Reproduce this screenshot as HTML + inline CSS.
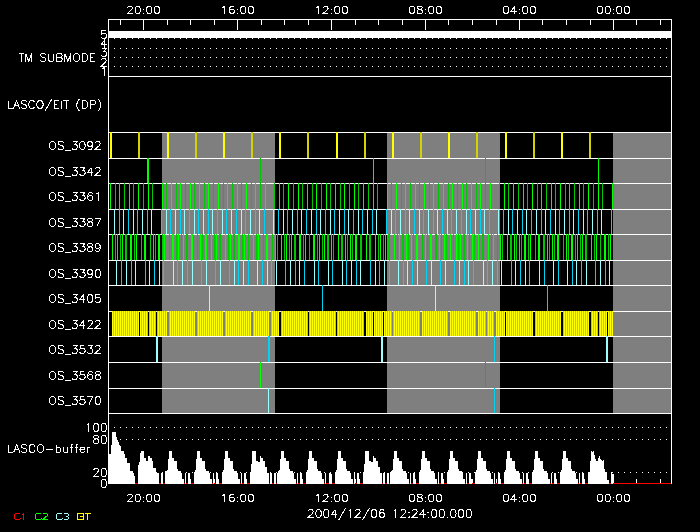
<!DOCTYPE html><html><head><meta charset="utf-8"><title>LASCO schedule</title><style>html,body{margin:0;padding:0;background:#000;width:700px;height:532px;overflow:hidden;font-family:"Liberation Sans",sans-serif}</style></head><body><svg width="700" height="532" viewBox="0 0 700 532" shape-rendering="crispEdges" style="display:block"><rect x="162" y="133" width="113" height="280" fill="#7f7f7f"/><rect x="387" y="133" width="113" height="280" fill="#7f7f7f"/><rect x="613" y="133" width="58" height="280" fill="#7f7f7f"/><rect x="108" y="19" width="564" height="1" fill="#ffffff"/><rect x="108" y="19" width="1" height="465" fill="#ffffff"/><rect x="671" y="19" width="1" height="465" fill="#ffffff"/><rect x="143" y="20" width="1" height="10" fill="#ffffff"/><rect x="237" y="20" width="1" height="10" fill="#ffffff"/><rect x="331" y="20" width="1" height="10" fill="#ffffff"/><rect x="425" y="20" width="1" height="10" fill="#ffffff"/><rect x="519" y="20" width="1" height="10" fill="#ffffff"/><rect x="613" y="20" width="1" height="10" fill="#ffffff"/><rect x="120" y="20" width="1" height="5" fill="#ffffff"/><rect x="167" y="20" width="1" height="5" fill="#ffffff"/><rect x="190" y="20" width="1" height="5" fill="#ffffff"/><rect x="214" y="20" width="1" height="5" fill="#ffffff"/><rect x="261" y="20" width="1" height="5" fill="#ffffff"/><rect x="284" y="20" width="1" height="5" fill="#ffffff"/><rect x="308" y="20" width="1" height="5" fill="#ffffff"/><rect x="355" y="20" width="1" height="5" fill="#ffffff"/><rect x="378" y="20" width="1" height="5" fill="#ffffff"/><rect x="402" y="20" width="1" height="5" fill="#ffffff"/><rect x="448" y="20" width="1" height="5" fill="#ffffff"/><rect x="472" y="20" width="1" height="5" fill="#ffffff"/><rect x="496" y="20" width="1" height="5" fill="#ffffff"/><rect x="542" y="20" width="1" height="5" fill="#ffffff"/><rect x="566" y="20" width="1" height="5" fill="#ffffff"/><rect x="590" y="20" width="1" height="5" fill="#ffffff"/><rect x="636" y="20" width="1" height="5" fill="#ffffff"/><rect x="660" y="20" width="1" height="5" fill="#ffffff"/><rect x="108" y="31" width="563" height="7" fill="#ffffff"/><rect x="114" y="38" width="1" height="1" fill="#ffffff"/><rect x="120" y="38" width="1" height="1" fill="#ffffff"/><rect x="126" y="38" width="1" height="1" fill="#ffffff"/><rect x="132" y="38" width="1" height="1" fill="#ffffff"/><rect x="138" y="38" width="1" height="1" fill="#ffffff"/><rect x="144" y="38" width="1" height="1" fill="#ffffff"/><rect x="150" y="38" width="1" height="1" fill="#ffffff"/><rect x="156" y="38" width="1" height="1" fill="#ffffff"/><rect x="162" y="38" width="1" height="1" fill="#ffffff"/><rect x="168" y="38" width="1" height="1" fill="#ffffff"/><rect x="174" y="38" width="1" height="1" fill="#ffffff"/><rect x="180" y="38" width="1" height="1" fill="#ffffff"/><rect x="186" y="38" width="1" height="1" fill="#ffffff"/><rect x="192" y="38" width="1" height="1" fill="#ffffff"/><rect x="198" y="38" width="1" height="1" fill="#ffffff"/><rect x="204" y="38" width="1" height="1" fill="#ffffff"/><rect x="210" y="38" width="1" height="1" fill="#ffffff"/><rect x="216" y="38" width="1" height="1" fill="#ffffff"/><rect x="222" y="38" width="1" height="1" fill="#ffffff"/><rect x="228" y="38" width="1" height="1" fill="#ffffff"/><rect x="234" y="38" width="1" height="1" fill="#ffffff"/><rect x="240" y="38" width="1" height="1" fill="#ffffff"/><rect x="246" y="38" width="1" height="1" fill="#ffffff"/><rect x="252" y="38" width="1" height="1" fill="#ffffff"/><rect x="258" y="38" width="1" height="1" fill="#ffffff"/><rect x="264" y="38" width="1" height="1" fill="#ffffff"/><rect x="270" y="38" width="1" height="1" fill="#ffffff"/><rect x="276" y="38" width="1" height="1" fill="#ffffff"/><rect x="282" y="38" width="1" height="1" fill="#ffffff"/><rect x="288" y="38" width="1" height="1" fill="#ffffff"/><rect x="294" y="38" width="1" height="1" fill="#ffffff"/><rect x="300" y="38" width="1" height="1" fill="#ffffff"/><rect x="306" y="38" width="1" height="1" fill="#ffffff"/><rect x="312" y="38" width="1" height="1" fill="#ffffff"/><rect x="318" y="38" width="1" height="1" fill="#ffffff"/><rect x="324" y="38" width="1" height="1" fill="#ffffff"/><rect x="330" y="38" width="1" height="1" fill="#ffffff"/><rect x="336" y="38" width="1" height="1" fill="#ffffff"/><rect x="342" y="38" width="1" height="1" fill="#ffffff"/><rect x="348" y="38" width="1" height="1" fill="#ffffff"/><rect x="354" y="38" width="1" height="1" fill="#ffffff"/><rect x="360" y="38" width="1" height="1" fill="#ffffff"/><rect x="366" y="38" width="1" height="1" fill="#ffffff"/><rect x="372" y="38" width="1" height="1" fill="#ffffff"/><rect x="378" y="38" width="1" height="1" fill="#ffffff"/><rect x="384" y="38" width="1" height="1" fill="#ffffff"/><rect x="390" y="38" width="1" height="1" fill="#ffffff"/><rect x="396" y="38" width="1" height="1" fill="#ffffff"/><rect x="402" y="38" width="1" height="1" fill="#ffffff"/><rect x="408" y="38" width="1" height="1" fill="#ffffff"/><rect x="414" y="38" width="1" height="1" fill="#ffffff"/><rect x="420" y="38" width="1" height="1" fill="#ffffff"/><rect x="426" y="38" width="1" height="1" fill="#ffffff"/><rect x="432" y="38" width="1" height="1" fill="#ffffff"/><rect x="438" y="38" width="1" height="1" fill="#ffffff"/><rect x="444" y="38" width="1" height="1" fill="#ffffff"/><rect x="450" y="38" width="1" height="1" fill="#ffffff"/><rect x="456" y="38" width="1" height="1" fill="#ffffff"/><rect x="462" y="38" width="1" height="1" fill="#ffffff"/><rect x="468" y="38" width="1" height="1" fill="#ffffff"/><rect x="474" y="38" width="1" height="1" fill="#ffffff"/><rect x="480" y="38" width="1" height="1" fill="#ffffff"/><rect x="486" y="38" width="1" height="1" fill="#ffffff"/><rect x="492" y="38" width="1" height="1" fill="#ffffff"/><rect x="498" y="38" width="1" height="1" fill="#ffffff"/><rect x="504" y="38" width="1" height="1" fill="#ffffff"/><rect x="510" y="38" width="1" height="1" fill="#ffffff"/><rect x="516" y="38" width="1" height="1" fill="#ffffff"/><rect x="522" y="38" width="1" height="1" fill="#ffffff"/><rect x="528" y="38" width="1" height="1" fill="#ffffff"/><rect x="534" y="38" width="1" height="1" fill="#ffffff"/><rect x="540" y="38" width="1" height="1" fill="#ffffff"/><rect x="546" y="38" width="1" height="1" fill="#ffffff"/><rect x="552" y="38" width="1" height="1" fill="#ffffff"/><rect x="558" y="38" width="1" height="1" fill="#ffffff"/><rect x="564" y="38" width="1" height="1" fill="#ffffff"/><rect x="570" y="38" width="1" height="1" fill="#ffffff"/><rect x="576" y="38" width="1" height="1" fill="#ffffff"/><rect x="582" y="38" width="1" height="1" fill="#ffffff"/><rect x="588" y="38" width="1" height="1" fill="#ffffff"/><rect x="594" y="38" width="1" height="1" fill="#ffffff"/><rect x="600" y="38" width="1" height="1" fill="#ffffff"/><rect x="606" y="38" width="1" height="1" fill="#ffffff"/><rect x="612" y="38" width="1" height="1" fill="#ffffff"/><rect x="618" y="38" width="1" height="1" fill="#ffffff"/><rect x="624" y="38" width="1" height="1" fill="#ffffff"/><rect x="630" y="38" width="1" height="1" fill="#ffffff"/><rect x="636" y="38" width="1" height="1" fill="#ffffff"/><rect x="642" y="38" width="1" height="1" fill="#ffffff"/><rect x="648" y="38" width="1" height="1" fill="#ffffff"/><rect x="654" y="38" width="1" height="1" fill="#ffffff"/><rect x="660" y="38" width="1" height="1" fill="#ffffff"/><rect x="666" y="38" width="1" height="1" fill="#ffffff"/><rect x="114" y="48" width="1" height="1" fill="#ffffff"/><rect x="120" y="48" width="1" height="1" fill="#ffffff"/><rect x="126" y="48" width="1" height="1" fill="#ffffff"/><rect x="132" y="48" width="1" height="1" fill="#ffffff"/><rect x="138" y="48" width="1" height="1" fill="#ffffff"/><rect x="144" y="48" width="1" height="1" fill="#ffffff"/><rect x="150" y="48" width="1" height="1" fill="#ffffff"/><rect x="156" y="48" width="1" height="1" fill="#ffffff"/><rect x="162" y="48" width="1" height="1" fill="#ffffff"/><rect x="168" y="48" width="1" height="1" fill="#ffffff"/><rect x="174" y="48" width="1" height="1" fill="#ffffff"/><rect x="180" y="48" width="1" height="1" fill="#ffffff"/><rect x="186" y="48" width="1" height="1" fill="#ffffff"/><rect x="192" y="48" width="1" height="1" fill="#ffffff"/><rect x="198" y="48" width="1" height="1" fill="#ffffff"/><rect x="204" y="48" width="1" height="1" fill="#ffffff"/><rect x="210" y="48" width="1" height="1" fill="#ffffff"/><rect x="216" y="48" width="1" height="1" fill="#ffffff"/><rect x="222" y="48" width="1" height="1" fill="#ffffff"/><rect x="228" y="48" width="1" height="1" fill="#ffffff"/><rect x="234" y="48" width="1" height="1" fill="#ffffff"/><rect x="240" y="48" width="1" height="1" fill="#ffffff"/><rect x="246" y="48" width="1" height="1" fill="#ffffff"/><rect x="252" y="48" width="1" height="1" fill="#ffffff"/><rect x="258" y="48" width="1" height="1" fill="#ffffff"/><rect x="264" y="48" width="1" height="1" fill="#ffffff"/><rect x="270" y="48" width="1" height="1" fill="#ffffff"/><rect x="276" y="48" width="1" height="1" fill="#ffffff"/><rect x="282" y="48" width="1" height="1" fill="#ffffff"/><rect x="288" y="48" width="1" height="1" fill="#ffffff"/><rect x="294" y="48" width="1" height="1" fill="#ffffff"/><rect x="300" y="48" width="1" height="1" fill="#ffffff"/><rect x="306" y="48" width="1" height="1" fill="#ffffff"/><rect x="312" y="48" width="1" height="1" fill="#ffffff"/><rect x="318" y="48" width="1" height="1" fill="#ffffff"/><rect x="324" y="48" width="1" height="1" fill="#ffffff"/><rect x="330" y="48" width="1" height="1" fill="#ffffff"/><rect x="336" y="48" width="1" height="1" fill="#ffffff"/><rect x="342" y="48" width="1" height="1" fill="#ffffff"/><rect x="348" y="48" width="1" height="1" fill="#ffffff"/><rect x="354" y="48" width="1" height="1" fill="#ffffff"/><rect x="360" y="48" width="1" height="1" fill="#ffffff"/><rect x="366" y="48" width="1" height="1" fill="#ffffff"/><rect x="372" y="48" width="1" height="1" fill="#ffffff"/><rect x="378" y="48" width="1" height="1" fill="#ffffff"/><rect x="384" y="48" width="1" height="1" fill="#ffffff"/><rect x="390" y="48" width="1" height="1" fill="#ffffff"/><rect x="396" y="48" width="1" height="1" fill="#ffffff"/><rect x="402" y="48" width="1" height="1" fill="#ffffff"/><rect x="408" y="48" width="1" height="1" fill="#ffffff"/><rect x="414" y="48" width="1" height="1" fill="#ffffff"/><rect x="420" y="48" width="1" height="1" fill="#ffffff"/><rect x="426" y="48" width="1" height="1" fill="#ffffff"/><rect x="432" y="48" width="1" height="1" fill="#ffffff"/><rect x="438" y="48" width="1" height="1" fill="#ffffff"/><rect x="444" y="48" width="1" height="1" fill="#ffffff"/><rect x="450" y="48" width="1" height="1" fill="#ffffff"/><rect x="456" y="48" width="1" height="1" fill="#ffffff"/><rect x="462" y="48" width="1" height="1" fill="#ffffff"/><rect x="468" y="48" width="1" height="1" fill="#ffffff"/><rect x="474" y="48" width="1" height="1" fill="#ffffff"/><rect x="480" y="48" width="1" height="1" fill="#ffffff"/><rect x="486" y="48" width="1" height="1" fill="#ffffff"/><rect x="492" y="48" width="1" height="1" fill="#ffffff"/><rect x="498" y="48" width="1" height="1" fill="#ffffff"/><rect x="504" y="48" width="1" height="1" fill="#ffffff"/><rect x="510" y="48" width="1" height="1" fill="#ffffff"/><rect x="516" y="48" width="1" height="1" fill="#ffffff"/><rect x="522" y="48" width="1" height="1" fill="#ffffff"/><rect x="528" y="48" width="1" height="1" fill="#ffffff"/><rect x="534" y="48" width="1" height="1" fill="#ffffff"/><rect x="540" y="48" width="1" height="1" fill="#ffffff"/><rect x="546" y="48" width="1" height="1" fill="#ffffff"/><rect x="552" y="48" width="1" height="1" fill="#ffffff"/><rect x="558" y="48" width="1" height="1" fill="#ffffff"/><rect x="564" y="48" width="1" height="1" fill="#ffffff"/><rect x="570" y="48" width="1" height="1" fill="#ffffff"/><rect x="576" y="48" width="1" height="1" fill="#ffffff"/><rect x="582" y="48" width="1" height="1" fill="#ffffff"/><rect x="588" y="48" width="1" height="1" fill="#ffffff"/><rect x="594" y="48" width="1" height="1" fill="#ffffff"/><rect x="600" y="48" width="1" height="1" fill="#ffffff"/><rect x="606" y="48" width="1" height="1" fill="#ffffff"/><rect x="612" y="48" width="1" height="1" fill="#ffffff"/><rect x="618" y="48" width="1" height="1" fill="#ffffff"/><rect x="624" y="48" width="1" height="1" fill="#ffffff"/><rect x="630" y="48" width="1" height="1" fill="#ffffff"/><rect x="636" y="48" width="1" height="1" fill="#ffffff"/><rect x="642" y="48" width="1" height="1" fill="#ffffff"/><rect x="648" y="48" width="1" height="1" fill="#ffffff"/><rect x="654" y="48" width="1" height="1" fill="#ffffff"/><rect x="660" y="48" width="1" height="1" fill="#ffffff"/><rect x="666" y="48" width="1" height="1" fill="#ffffff"/><rect x="114" y="57" width="1" height="1" fill="#ffffff"/><rect x="120" y="57" width="1" height="1" fill="#ffffff"/><rect x="126" y="57" width="1" height="1" fill="#ffffff"/><rect x="132" y="57" width="1" height="1" fill="#ffffff"/><rect x="138" y="57" width="1" height="1" fill="#ffffff"/><rect x="144" y="57" width="1" height="1" fill="#ffffff"/><rect x="150" y="57" width="1" height="1" fill="#ffffff"/><rect x="156" y="57" width="1" height="1" fill="#ffffff"/><rect x="162" y="57" width="1" height="1" fill="#ffffff"/><rect x="168" y="57" width="1" height="1" fill="#ffffff"/><rect x="174" y="57" width="1" height="1" fill="#ffffff"/><rect x="180" y="57" width="1" height="1" fill="#ffffff"/><rect x="186" y="57" width="1" height="1" fill="#ffffff"/><rect x="192" y="57" width="1" height="1" fill="#ffffff"/><rect x="198" y="57" width="1" height="1" fill="#ffffff"/><rect x="204" y="57" width="1" height="1" fill="#ffffff"/><rect x="210" y="57" width="1" height="1" fill="#ffffff"/><rect x="216" y="57" width="1" height="1" fill="#ffffff"/><rect x="222" y="57" width="1" height="1" fill="#ffffff"/><rect x="228" y="57" width="1" height="1" fill="#ffffff"/><rect x="234" y="57" width="1" height="1" fill="#ffffff"/><rect x="240" y="57" width="1" height="1" fill="#ffffff"/><rect x="246" y="57" width="1" height="1" fill="#ffffff"/><rect x="252" y="57" width="1" height="1" fill="#ffffff"/><rect x="258" y="57" width="1" height="1" fill="#ffffff"/><rect x="264" y="57" width="1" height="1" fill="#ffffff"/><rect x="270" y="57" width="1" height="1" fill="#ffffff"/><rect x="276" y="57" width="1" height="1" fill="#ffffff"/><rect x="282" y="57" width="1" height="1" fill="#ffffff"/><rect x="288" y="57" width="1" height="1" fill="#ffffff"/><rect x="294" y="57" width="1" height="1" fill="#ffffff"/><rect x="300" y="57" width="1" height="1" fill="#ffffff"/><rect x="306" y="57" width="1" height="1" fill="#ffffff"/><rect x="312" y="57" width="1" height="1" fill="#ffffff"/><rect x="318" y="57" width="1" height="1" fill="#ffffff"/><rect x="324" y="57" width="1" height="1" fill="#ffffff"/><rect x="330" y="57" width="1" height="1" fill="#ffffff"/><rect x="336" y="57" width="1" height="1" fill="#ffffff"/><rect x="342" y="57" width="1" height="1" fill="#ffffff"/><rect x="348" y="57" width="1" height="1" fill="#ffffff"/><rect x="354" y="57" width="1" height="1" fill="#ffffff"/><rect x="360" y="57" width="1" height="1" fill="#ffffff"/><rect x="366" y="57" width="1" height="1" fill="#ffffff"/><rect x="372" y="57" width="1" height="1" fill="#ffffff"/><rect x="378" y="57" width="1" height="1" fill="#ffffff"/><rect x="384" y="57" width="1" height="1" fill="#ffffff"/><rect x="390" y="57" width="1" height="1" fill="#ffffff"/><rect x="396" y="57" width="1" height="1" fill="#ffffff"/><rect x="402" y="57" width="1" height="1" fill="#ffffff"/><rect x="408" y="57" width="1" height="1" fill="#ffffff"/><rect x="414" y="57" width="1" height="1" fill="#ffffff"/><rect x="420" y="57" width="1" height="1" fill="#ffffff"/><rect x="426" y="57" width="1" height="1" fill="#ffffff"/><rect x="432" y="57" width="1" height="1" fill="#ffffff"/><rect x="438" y="57" width="1" height="1" fill="#ffffff"/><rect x="444" y="57" width="1" height="1" fill="#ffffff"/><rect x="450" y="57" width="1" height="1" fill="#ffffff"/><rect x="456" y="57" width="1" height="1" fill="#ffffff"/><rect x="462" y="57" width="1" height="1" fill="#ffffff"/><rect x="468" y="57" width="1" height="1" fill="#ffffff"/><rect x="474" y="57" width="1" height="1" fill="#ffffff"/><rect x="480" y="57" width="1" height="1" fill="#ffffff"/><rect x="486" y="57" width="1" height="1" fill="#ffffff"/><rect x="492" y="57" width="1" height="1" fill="#ffffff"/><rect x="498" y="57" width="1" height="1" fill="#ffffff"/><rect x="504" y="57" width="1" height="1" fill="#ffffff"/><rect x="510" y="57" width="1" height="1" fill="#ffffff"/><rect x="516" y="57" width="1" height="1" fill="#ffffff"/><rect x="522" y="57" width="1" height="1" fill="#ffffff"/><rect x="528" y="57" width="1" height="1" fill="#ffffff"/><rect x="534" y="57" width="1" height="1" fill="#ffffff"/><rect x="540" y="57" width="1" height="1" fill="#ffffff"/><rect x="546" y="57" width="1" height="1" fill="#ffffff"/><rect x="552" y="57" width="1" height="1" fill="#ffffff"/><rect x="558" y="57" width="1" height="1" fill="#ffffff"/><rect x="564" y="57" width="1" height="1" fill="#ffffff"/><rect x="570" y="57" width="1" height="1" fill="#ffffff"/><rect x="576" y="57" width="1" height="1" fill="#ffffff"/><rect x="582" y="57" width="1" height="1" fill="#ffffff"/><rect x="588" y="57" width="1" height="1" fill="#ffffff"/><rect x="594" y="57" width="1" height="1" fill="#ffffff"/><rect x="600" y="57" width="1" height="1" fill="#ffffff"/><rect x="606" y="57" width="1" height="1" fill="#ffffff"/><rect x="612" y="57" width="1" height="1" fill="#ffffff"/><rect x="618" y="57" width="1" height="1" fill="#ffffff"/><rect x="624" y="57" width="1" height="1" fill="#ffffff"/><rect x="630" y="57" width="1" height="1" fill="#ffffff"/><rect x="636" y="57" width="1" height="1" fill="#ffffff"/><rect x="642" y="57" width="1" height="1" fill="#ffffff"/><rect x="648" y="57" width="1" height="1" fill="#ffffff"/><rect x="654" y="57" width="1" height="1" fill="#ffffff"/><rect x="660" y="57" width="1" height="1" fill="#ffffff"/><rect x="666" y="57" width="1" height="1" fill="#ffffff"/><rect x="114" y="66" width="1" height="1" fill="#ffffff"/><rect x="120" y="66" width="1" height="1" fill="#ffffff"/><rect x="126" y="66" width="1" height="1" fill="#ffffff"/><rect x="132" y="66" width="1" height="1" fill="#ffffff"/><rect x="138" y="66" width="1" height="1" fill="#ffffff"/><rect x="144" y="66" width="1" height="1" fill="#ffffff"/><rect x="150" y="66" width="1" height="1" fill="#ffffff"/><rect x="156" y="66" width="1" height="1" fill="#ffffff"/><rect x="162" y="66" width="1" height="1" fill="#ffffff"/><rect x="168" y="66" width="1" height="1" fill="#ffffff"/><rect x="174" y="66" width="1" height="1" fill="#ffffff"/><rect x="180" y="66" width="1" height="1" fill="#ffffff"/><rect x="186" y="66" width="1" height="1" fill="#ffffff"/><rect x="192" y="66" width="1" height="1" fill="#ffffff"/><rect x="198" y="66" width="1" height="1" fill="#ffffff"/><rect x="204" y="66" width="1" height="1" fill="#ffffff"/><rect x="210" y="66" width="1" height="1" fill="#ffffff"/><rect x="216" y="66" width="1" height="1" fill="#ffffff"/><rect x="222" y="66" width="1" height="1" fill="#ffffff"/><rect x="228" y="66" width="1" height="1" fill="#ffffff"/><rect x="234" y="66" width="1" height="1" fill="#ffffff"/><rect x="240" y="66" width="1" height="1" fill="#ffffff"/><rect x="246" y="66" width="1" height="1" fill="#ffffff"/><rect x="252" y="66" width="1" height="1" fill="#ffffff"/><rect x="258" y="66" width="1" height="1" fill="#ffffff"/><rect x="264" y="66" width="1" height="1" fill="#ffffff"/><rect x="270" y="66" width="1" height="1" fill="#ffffff"/><rect x="276" y="66" width="1" height="1" fill="#ffffff"/><rect x="282" y="66" width="1" height="1" fill="#ffffff"/><rect x="288" y="66" width="1" height="1" fill="#ffffff"/><rect x="294" y="66" width="1" height="1" fill="#ffffff"/><rect x="300" y="66" width="1" height="1" fill="#ffffff"/><rect x="306" y="66" width="1" height="1" fill="#ffffff"/><rect x="312" y="66" width="1" height="1" fill="#ffffff"/><rect x="318" y="66" width="1" height="1" fill="#ffffff"/><rect x="324" y="66" width="1" height="1" fill="#ffffff"/><rect x="330" y="66" width="1" height="1" fill="#ffffff"/><rect x="336" y="66" width="1" height="1" fill="#ffffff"/><rect x="342" y="66" width="1" height="1" fill="#ffffff"/><rect x="348" y="66" width="1" height="1" fill="#ffffff"/><rect x="354" y="66" width="1" height="1" fill="#ffffff"/><rect x="360" y="66" width="1" height="1" fill="#ffffff"/><rect x="366" y="66" width="1" height="1" fill="#ffffff"/><rect x="372" y="66" width="1" height="1" fill="#ffffff"/><rect x="378" y="66" width="1" height="1" fill="#ffffff"/><rect x="384" y="66" width="1" height="1" fill="#ffffff"/><rect x="390" y="66" width="1" height="1" fill="#ffffff"/><rect x="396" y="66" width="1" height="1" fill="#ffffff"/><rect x="402" y="66" width="1" height="1" fill="#ffffff"/><rect x="408" y="66" width="1" height="1" fill="#ffffff"/><rect x="414" y="66" width="1" height="1" fill="#ffffff"/><rect x="420" y="66" width="1" height="1" fill="#ffffff"/><rect x="426" y="66" width="1" height="1" fill="#ffffff"/><rect x="432" y="66" width="1" height="1" fill="#ffffff"/><rect x="438" y="66" width="1" height="1" fill="#ffffff"/><rect x="444" y="66" width="1" height="1" fill="#ffffff"/><rect x="450" y="66" width="1" height="1" fill="#ffffff"/><rect x="456" y="66" width="1" height="1" fill="#ffffff"/><rect x="462" y="66" width="1" height="1" fill="#ffffff"/><rect x="468" y="66" width="1" height="1" fill="#ffffff"/><rect x="474" y="66" width="1" height="1" fill="#ffffff"/><rect x="480" y="66" width="1" height="1" fill="#ffffff"/><rect x="486" y="66" width="1" height="1" fill="#ffffff"/><rect x="492" y="66" width="1" height="1" fill="#ffffff"/><rect x="498" y="66" width="1" height="1" fill="#ffffff"/><rect x="504" y="66" width="1" height="1" fill="#ffffff"/><rect x="510" y="66" width="1" height="1" fill="#ffffff"/><rect x="516" y="66" width="1" height="1" fill="#ffffff"/><rect x="522" y="66" width="1" height="1" fill="#ffffff"/><rect x="528" y="66" width="1" height="1" fill="#ffffff"/><rect x="534" y="66" width="1" height="1" fill="#ffffff"/><rect x="540" y="66" width="1" height="1" fill="#ffffff"/><rect x="546" y="66" width="1" height="1" fill="#ffffff"/><rect x="552" y="66" width="1" height="1" fill="#ffffff"/><rect x="558" y="66" width="1" height="1" fill="#ffffff"/><rect x="564" y="66" width="1" height="1" fill="#ffffff"/><rect x="570" y="66" width="1" height="1" fill="#ffffff"/><rect x="576" y="66" width="1" height="1" fill="#ffffff"/><rect x="582" y="66" width="1" height="1" fill="#ffffff"/><rect x="588" y="66" width="1" height="1" fill="#ffffff"/><rect x="594" y="66" width="1" height="1" fill="#ffffff"/><rect x="600" y="66" width="1" height="1" fill="#ffffff"/><rect x="606" y="66" width="1" height="1" fill="#ffffff"/><rect x="612" y="66" width="1" height="1" fill="#ffffff"/><rect x="618" y="66" width="1" height="1" fill="#ffffff"/><rect x="624" y="66" width="1" height="1" fill="#ffffff"/><rect x="630" y="66" width="1" height="1" fill="#ffffff"/><rect x="636" y="66" width="1" height="1" fill="#ffffff"/><rect x="642" y="66" width="1" height="1" fill="#ffffff"/><rect x="648" y="66" width="1" height="1" fill="#ffffff"/><rect x="654" y="66" width="1" height="1" fill="#ffffff"/><rect x="660" y="66" width="1" height="1" fill="#ffffff"/><rect x="666" y="66" width="1" height="1" fill="#ffffff"/><rect x="108" y="76" width="564" height="1" fill="#ffffff"/><rect x="108" y="132" width="564" height="1" fill="#ffffff"/><rect x="108" y="158" width="564" height="1" fill="#ffffff"/><rect x="108" y="183" width="564" height="1" fill="#ffffff"/><rect x="108" y="209" width="564" height="1" fill="#ffffff"/><rect x="108" y="234" width="564" height="1" fill="#ffffff"/><rect x="108" y="260" width="564" height="1" fill="#ffffff"/><rect x="108" y="285" width="564" height="1" fill="#ffffff"/><rect x="108" y="311" width="564" height="1" fill="#ffffff"/><rect x="108" y="336" width="564" height="1" fill="#ffffff"/><rect x="108" y="362" width="564" height="1" fill="#ffffff"/><rect x="108" y="388" width="564" height="1" fill="#ffffff"/><rect x="108" y="413" width="564" height="1" fill="#ffffff"/><rect x="110" y="132" width="2" height="26" fill="#ffff00"/><rect x="138" y="132" width="2" height="26" fill="#d2d200"/><rect x="167" y="132" width="2" height="26" fill="#ffff00"/><rect x="195" y="132" width="2" height="26" fill="#d2d200"/><rect x="223" y="132" width="2" height="26" fill="#ffff00"/><rect x="251" y="132" width="2" height="26" fill="#d2d200"/><rect x="279" y="132" width="2" height="26" fill="#ffff00"/><rect x="307" y="132" width="2" height="26" fill="#d2d200"/><rect x="336" y="132" width="2" height="26" fill="#ffff00"/><rect x="364" y="132" width="2" height="26" fill="#d2d200"/><rect x="392" y="132" width="2" height="26" fill="#ffff00"/><rect x="420" y="132" width="2" height="26" fill="#d2d200"/><rect x="448" y="132" width="2" height="26" fill="#ffff00"/><rect x="476" y="132" width="2" height="26" fill="#d2d200"/><rect x="505" y="132" width="2" height="26" fill="#ffff00"/><rect x="533" y="132" width="2" height="26" fill="#d2d200"/><rect x="561" y="132" width="2" height="26" fill="#ffff00"/><rect x="589" y="132" width="2" height="26" fill="#d2d200"/><rect x="147" y="158" width="2" height="25" fill="#00ff00"/><rect x="260" y="158" width="1" height="25" fill="#00c800"/><rect x="373" y="158" width="1" height="25" fill="#00ff00"/><rect x="485" y="158" width="1" height="25" fill="#00c800"/><rect x="598" y="158" width="1" height="25" fill="#00ff00"/><rect x="110" y="183" width="1" height="26" fill="#00ff00"/><rect x="115" y="183" width="1" height="26" fill="#00c800"/><rect x="119" y="183" width="1" height="26" fill="#00ff00"/><rect x="124" y="183" width="1" height="26" fill="#00c800"/><rect x="129" y="183" width="1" height="26" fill="#00ff00"/><rect x="133" y="183" width="1" height="26" fill="#00c800"/><rect x="138" y="183" width="1" height="26" fill="#00ff00"/><rect x="143" y="183" width="1" height="26" fill="#00c800"/><rect x="148" y="183" width="1" height="26" fill="#00ff00"/><rect x="152" y="183" width="1" height="26" fill="#00c800"/><rect x="162" y="183" width="1" height="26" fill="#00ff00"/><rect x="166" y="183" width="1" height="26" fill="#00c800"/><rect x="171" y="183" width="1" height="26" fill="#00ff00"/><rect x="176" y="183" width="1" height="26" fill="#00c800"/><rect x="180" y="183" width="1" height="26" fill="#00ff00"/><rect x="185" y="183" width="1" height="26" fill="#00c800"/><rect x="190" y="183" width="1" height="26" fill="#00ff00"/><rect x="194" y="183" width="1" height="26" fill="#00c800"/><rect x="199" y="183" width="1" height="26" fill="#00ff00"/><rect x="204" y="183" width="1" height="26" fill="#00c800"/><rect x="208" y="183" width="1" height="26" fill="#00ff00"/><rect x="213" y="183" width="1" height="26" fill="#00c800"/><rect x="218" y="183" width="1" height="26" fill="#00ff00"/><rect x="223" y="183" width="1" height="26" fill="#00c800"/><rect x="227" y="183" width="1" height="26" fill="#00ff00"/><rect x="232" y="183" width="1" height="26" fill="#00c800"/><rect x="237" y="183" width="1" height="26" fill="#00ff00"/><rect x="241" y="183" width="1" height="26" fill="#00c800"/><rect x="246" y="183" width="1" height="26" fill="#00ff00"/><rect x="251" y="183" width="1" height="26" fill="#00c800"/><rect x="255" y="183" width="1" height="26" fill="#00ff00"/><rect x="260" y="183" width="1" height="26" fill="#00c800"/><rect x="265" y="183" width="1" height="26" fill="#00ff00"/><rect x="274" y="183" width="1" height="26" fill="#00c800"/><rect x="279" y="183" width="1" height="26" fill="#00ff00"/><rect x="283" y="183" width="1" height="26" fill="#00c800"/><rect x="288" y="183" width="1" height="26" fill="#00ff00"/><rect x="293" y="183" width="1" height="26" fill="#00c800"/><rect x="298" y="183" width="1" height="26" fill="#00ff00"/><rect x="302" y="183" width="1" height="26" fill="#00c800"/><rect x="307" y="183" width="1" height="26" fill="#00ff00"/><rect x="312" y="183" width="1" height="26" fill="#00c800"/><rect x="316" y="183" width="1" height="26" fill="#00ff00"/><rect x="321" y="183" width="1" height="26" fill="#00c800"/><rect x="326" y="183" width="1" height="26" fill="#00ff00"/><rect x="330" y="183" width="1" height="26" fill="#00c800"/><rect x="335" y="183" width="1" height="26" fill="#00ff00"/><rect x="340" y="183" width="1" height="26" fill="#00c800"/><rect x="344" y="183" width="1" height="26" fill="#00ff00"/><rect x="349" y="183" width="1" height="26" fill="#00c800"/><rect x="354" y="183" width="1" height="26" fill="#00ff00"/><rect x="358" y="183" width="1" height="26" fill="#00c800"/><rect x="363" y="183" width="1" height="26" fill="#00ff00"/><rect x="368" y="183" width="1" height="26" fill="#00c800"/><rect x="373" y="183" width="1" height="26" fill="#00ff00"/><rect x="377" y="183" width="1" height="26" fill="#00c800"/><rect x="387" y="183" width="1" height="26" fill="#00ff00"/><rect x="391" y="183" width="1" height="26" fill="#00c800"/><rect x="396" y="183" width="1" height="26" fill="#00ff00"/><rect x="401" y="183" width="1" height="26" fill="#00c800"/><rect x="405" y="183" width="1" height="26" fill="#00ff00"/><rect x="410" y="183" width="1" height="26" fill="#00c800"/><rect x="415" y="183" width="1" height="26" fill="#00ff00"/><rect x="419" y="183" width="1" height="26" fill="#00c800"/><rect x="424" y="183" width="1" height="26" fill="#00ff00"/><rect x="429" y="183" width="1" height="26" fill="#00c800"/><rect x="433" y="183" width="1" height="26" fill="#00ff00"/><rect x="438" y="183" width="1" height="26" fill="#00c800"/><rect x="443" y="183" width="1" height="26" fill="#00ff00"/><rect x="448" y="183" width="1" height="26" fill="#00c800"/><rect x="452" y="183" width="1" height="26" fill="#00ff00"/><rect x="457" y="183" width="1" height="26" fill="#00c800"/><rect x="462" y="183" width="1" height="26" fill="#00ff00"/><rect x="466" y="183" width="1" height="26" fill="#00c800"/><rect x="471" y="183" width="1" height="26" fill="#00ff00"/><rect x="476" y="183" width="1" height="26" fill="#00c800"/><rect x="480" y="183" width="1" height="26" fill="#00ff00"/><rect x="485" y="183" width="1" height="26" fill="#00c800"/><rect x="490" y="183" width="1" height="26" fill="#00ff00"/><rect x="499" y="183" width="1" height="26" fill="#00c800"/><rect x="504" y="183" width="1" height="26" fill="#00ff00"/><rect x="508" y="183" width="1" height="26" fill="#00c800"/><rect x="513" y="183" width="1" height="26" fill="#00ff00"/><rect x="518" y="183" width="1" height="26" fill="#00c800"/><rect x="523" y="183" width="1" height="26" fill="#00ff00"/><rect x="527" y="183" width="1" height="26" fill="#00c800"/><rect x="532" y="183" width="1" height="26" fill="#00ff00"/><rect x="537" y="183" width="1" height="26" fill="#00c800"/><rect x="541" y="183" width="1" height="26" fill="#00ff00"/><rect x="546" y="183" width="1" height="26" fill="#00c800"/><rect x="551" y="183" width="1" height="26" fill="#00ff00"/><rect x="555" y="183" width="1" height="26" fill="#00c800"/><rect x="560" y="183" width="1" height="26" fill="#00ff00"/><rect x="565" y="183" width="1" height="26" fill="#00c800"/><rect x="569" y="183" width="1" height="26" fill="#00ff00"/><rect x="574" y="183" width="1" height="26" fill="#00c800"/><rect x="579" y="183" width="1" height="26" fill="#00ff00"/><rect x="583" y="183" width="1" height="26" fill="#00c800"/><rect x="588" y="183" width="1" height="26" fill="#00ff00"/><rect x="593" y="183" width="1" height="26" fill="#00c800"/><rect x="598" y="183" width="1" height="26" fill="#00ff00"/><rect x="602" y="183" width="1" height="26" fill="#00c800"/><rect x="612" y="183" width="1" height="26" fill="#00ff00"/><rect x="114" y="209" width="1" height="25" fill="#9bffff"/><rect x="119" y="209" width="1" height="25" fill="#00d2f0"/><rect x="123" y="209" width="1" height="25" fill="#9bffff"/><rect x="128" y="209" width="1" height="25" fill="#00d2f0"/><rect x="133" y="209" width="1" height="25" fill="#9bffff"/><rect x="137" y="209" width="1" height="25" fill="#00d2f0"/><rect x="142" y="209" width="1" height="25" fill="#9bffff"/><rect x="147" y="209" width="1" height="25" fill="#00d2f0"/><rect x="151" y="209" width="1" height="25" fill="#9bffff"/><rect x="161" y="209" width="1" height="25" fill="#00d2f0"/><rect x="166" y="209" width="1" height="25" fill="#9bffff"/><rect x="170" y="209" width="1" height="25" fill="#00d2f0"/><rect x="175" y="209" width="1" height="25" fill="#9bffff"/><rect x="180" y="209" width="1" height="25" fill="#00d2f0"/><rect x="184" y="209" width="1" height="25" fill="#9bffff"/><rect x="189" y="209" width="1" height="25" fill="#00d2f0"/><rect x="194" y="209" width="1" height="25" fill="#9bffff"/><rect x="198" y="209" width="1" height="25" fill="#00d2f0"/><rect x="203" y="209" width="1" height="25" fill="#9bffff"/><rect x="208" y="209" width="1" height="25" fill="#00d2f0"/><rect x="212" y="209" width="1" height="25" fill="#9bffff"/><rect x="217" y="209" width="1" height="25" fill="#00d2f0"/><rect x="222" y="209" width="1" height="25" fill="#9bffff"/><rect x="226" y="209" width="1" height="25" fill="#00d2f0"/><rect x="231" y="209" width="1" height="25" fill="#9bffff"/><rect x="236" y="209" width="1" height="25" fill="#00d2f0"/><rect x="241" y="209" width="1" height="25" fill="#9bffff"/><rect x="245" y="209" width="1" height="25" fill="#00d2f0"/><rect x="250" y="209" width="1" height="25" fill="#9bffff"/><rect x="255" y="209" width="1" height="25" fill="#00d2f0"/><rect x="259" y="209" width="1" height="25" fill="#9bffff"/><rect x="264" y="209" width="1" height="25" fill="#00d2f0"/><rect x="273" y="209" width="1" height="25" fill="#9bffff"/><rect x="278" y="209" width="1" height="25" fill="#00d2f0"/><rect x="283" y="209" width="1" height="25" fill="#9bffff"/><rect x="287" y="209" width="1" height="25" fill="#00d2f0"/><rect x="292" y="209" width="1" height="25" fill="#9bffff"/><rect x="297" y="209" width="1" height="25" fill="#00d2f0"/><rect x="301" y="209" width="1" height="25" fill="#9bffff"/><rect x="306" y="209" width="1" height="25" fill="#00d2f0"/><rect x="311" y="209" width="1" height="25" fill="#9bffff"/><rect x="316" y="209" width="1" height="25" fill="#00d2f0"/><rect x="320" y="209" width="1" height="25" fill="#9bffff"/><rect x="325" y="209" width="1" height="25" fill="#00d2f0"/><rect x="330" y="209" width="1" height="25" fill="#9bffff"/><rect x="334" y="209" width="1" height="25" fill="#00d2f0"/><rect x="339" y="209" width="1" height="25" fill="#9bffff"/><rect x="344" y="209" width="1" height="25" fill="#00d2f0"/><rect x="348" y="209" width="1" height="25" fill="#9bffff"/><rect x="353" y="209" width="1" height="25" fill="#00d2f0"/><rect x="358" y="209" width="1" height="25" fill="#9bffff"/><rect x="362" y="209" width="1" height="25" fill="#00d2f0"/><rect x="367" y="209" width="1" height="25" fill="#9bffff"/><rect x="372" y="209" width="1" height="25" fill="#00d2f0"/><rect x="376" y="209" width="1" height="25" fill="#9bffff"/><rect x="386" y="209" width="1" height="25" fill="#00d2f0"/><rect x="391" y="209" width="1" height="25" fill="#9bffff"/><rect x="395" y="209" width="1" height="25" fill="#00d2f0"/><rect x="400" y="209" width="1" height="25" fill="#9bffff"/><rect x="405" y="209" width="1" height="25" fill="#00d2f0"/><rect x="409" y="209" width="1" height="25" fill="#9bffff"/><rect x="414" y="209" width="1" height="25" fill="#00d2f0"/><rect x="419" y="209" width="1" height="25" fill="#9bffff"/><rect x="423" y="209" width="1" height="25" fill="#00d2f0"/><rect x="428" y="209" width="1" height="25" fill="#9bffff"/><rect x="433" y="209" width="1" height="25" fill="#00d2f0"/><rect x="437" y="209" width="1" height="25" fill="#9bffff"/><rect x="442" y="209" width="1" height="25" fill="#00d2f0"/><rect x="447" y="209" width="1" height="25" fill="#9bffff"/><rect x="451" y="209" width="1" height="25" fill="#00d2f0"/><rect x="456" y="209" width="1" height="25" fill="#9bffff"/><rect x="461" y="209" width="1" height="25" fill="#00d2f0"/><rect x="466" y="209" width="1" height="25" fill="#9bffff"/><rect x="470" y="209" width="1" height="25" fill="#00d2f0"/><rect x="475" y="209" width="1" height="25" fill="#9bffff"/><rect x="480" y="209" width="1" height="25" fill="#00d2f0"/><rect x="484" y="209" width="1" height="25" fill="#9bffff"/><rect x="489" y="209" width="1" height="25" fill="#00d2f0"/><rect x="498" y="209" width="1" height="25" fill="#9bffff"/><rect x="503" y="209" width="1" height="25" fill="#00d2f0"/><rect x="508" y="209" width="1" height="25" fill="#9bffff"/><rect x="512" y="209" width="1" height="25" fill="#00d2f0"/><rect x="517" y="209" width="1" height="25" fill="#9bffff"/><rect x="522" y="209" width="1" height="25" fill="#00d2f0"/><rect x="526" y="209" width="1" height="25" fill="#9bffff"/><rect x="531" y="209" width="1" height="25" fill="#00d2f0"/><rect x="536" y="209" width="1" height="25" fill="#9bffff"/><rect x="541" y="209" width="1" height="25" fill="#00d2f0"/><rect x="545" y="209" width="1" height="25" fill="#9bffff"/><rect x="550" y="209" width="1" height="25" fill="#00d2f0"/><rect x="555" y="209" width="1" height="25" fill="#9bffff"/><rect x="559" y="209" width="1" height="25" fill="#00d2f0"/><rect x="564" y="209" width="1" height="25" fill="#9bffff"/><rect x="569" y="209" width="1" height="25" fill="#00d2f0"/><rect x="573" y="209" width="1" height="25" fill="#9bffff"/><rect x="578" y="209" width="1" height="25" fill="#00d2f0"/><rect x="583" y="209" width="1" height="25" fill="#9bffff"/><rect x="587" y="209" width="1" height="25" fill="#00d2f0"/><rect x="592" y="209" width="1" height="25" fill="#9bffff"/><rect x="597" y="209" width="1" height="25" fill="#00d2f0"/><rect x="601" y="209" width="1" height="25" fill="#9bffff"/><rect x="611" y="209" width="1" height="25" fill="#00d2f0"/><rect x="112" y="234" width="1" height="26" fill="#00ff00"/><rect x="115" y="234" width="1" height="26" fill="#00c800"/><rect x="117" y="234" width="1" height="26" fill="#00ff00"/><rect x="120" y="234" width="1" height="26" fill="#00c800"/><rect x="122" y="234" width="1" height="26" fill="#00ff00"/><rect x="125" y="234" width="2" height="26" fill="#00c800"/><rect x="130" y="234" width="2" height="26" fill="#00ff00"/><rect x="134" y="234" width="1" height="26" fill="#00c800"/><rect x="136" y="234" width="1" height="26" fill="#00ff00"/><rect x="141" y="234" width="1" height="26" fill="#00c800"/><rect x="144" y="234" width="2" height="26" fill="#00ff00"/><rect x="150" y="234" width="1" height="26" fill="#00c800"/><rect x="153" y="234" width="1" height="26" fill="#00ff00"/><rect x="155" y="234" width="1" height="26" fill="#00c800"/><rect x="158" y="234" width="2" height="26" fill="#00ff00"/><rect x="162" y="234" width="1" height="26" fill="#00c800"/><rect x="164" y="234" width="1" height="26" fill="#00ff00"/><rect x="169" y="234" width="1" height="26" fill="#00c800"/><rect x="172" y="234" width="2" height="26" fill="#00ff00"/><rect x="176" y="234" width="1" height="26" fill="#00c800"/><rect x="178" y="234" width="1" height="26" fill="#00ff00"/><rect x="181" y="234" width="1" height="26" fill="#00c800"/><rect x="183" y="234" width="1" height="26" fill="#00ff00"/><rect x="186" y="234" width="2" height="26" fill="#00c800"/><rect x="191" y="234" width="2" height="26" fill="#00ff00"/><rect x="197" y="234" width="1" height="26" fill="#00c800"/><rect x="200" y="234" width="1" height="26" fill="#00ff00"/><rect x="202" y="234" width="1" height="26" fill="#00c800"/><rect x="205" y="234" width="2" height="26" fill="#00ff00"/><rect x="209" y="234" width="1" height="26" fill="#00c800"/><rect x="211" y="234" width="1" height="26" fill="#00ff00"/><rect x="214" y="234" width="1" height="26" fill="#00c800"/><rect x="216" y="234" width="1" height="26" fill="#00ff00"/><rect x="219" y="234" width="2" height="26" fill="#00c800"/><rect x="225" y="234" width="1" height="26" fill="#00ff00"/><rect x="228" y="234" width="1" height="26" fill="#00c800"/><rect x="230" y="234" width="1" height="26" fill="#00ff00"/><rect x="233" y="234" width="2" height="26" fill="#00c800"/><rect x="238" y="234" width="2" height="26" fill="#00ff00"/><rect x="242" y="234" width="1" height="26" fill="#00c800"/><rect x="244" y="234" width="1" height="26" fill="#00ff00"/><rect x="248" y="234" width="1" height="26" fill="#00c800"/><rect x="253" y="234" width="1" height="26" fill="#00ff00"/><rect x="256" y="234" width="1" height="26" fill="#00c800"/><rect x="258" y="234" width="1" height="26" fill="#00ff00"/><rect x="263" y="234" width="1" height="26" fill="#00c800"/><rect x="266" y="234" width="2" height="26" fill="#00ff00"/><rect x="272" y="234" width="1" height="26" fill="#00c800"/><rect x="275" y="234" width="1" height="26" fill="#00ff00"/><rect x="277" y="234" width="1" height="26" fill="#00c800"/><rect x="281" y="234" width="1" height="26" fill="#00ff00"/><rect x="284" y="234" width="1" height="26" fill="#00c800"/><rect x="286" y="234" width="1" height="26" fill="#00ff00"/><rect x="289" y="234" width="1" height="26" fill="#00c800"/><rect x="291" y="234" width="1" height="26" fill="#00ff00"/><rect x="294" y="234" width="2" height="26" fill="#00c800"/><rect x="299" y="234" width="2" height="26" fill="#00ff00"/><rect x="303" y="234" width="1" height="26" fill="#00c800"/><rect x="305" y="234" width="1" height="26" fill="#00ff00"/><rect x="309" y="234" width="1" height="26" fill="#00c800"/><rect x="313" y="234" width="2" height="26" fill="#00ff00"/><rect x="317" y="234" width="1" height="26" fill="#00c800"/><rect x="319" y="234" width="1" height="26" fill="#00ff00"/><rect x="322" y="234" width="1" height="26" fill="#00c800"/><rect x="324" y="234" width="1" height="26" fill="#00ff00"/><rect x="327" y="234" width="2" height="26" fill="#00c800"/><rect x="331" y="234" width="1" height="26" fill="#00ff00"/><rect x="333" y="234" width="1" height="26" fill="#00c800"/><rect x="338" y="234" width="1" height="26" fill="#00ff00"/><rect x="341" y="234" width="2" height="26" fill="#00c800"/><rect x="345" y="234" width="1" height="26" fill="#00ff00"/><rect x="347" y="234" width="1" height="26" fill="#00c800"/><rect x="350" y="234" width="1" height="26" fill="#00ff00"/><rect x="352" y="234" width="1" height="26" fill="#00c800"/><rect x="355" y="234" width="2" height="26" fill="#00ff00"/><rect x="360" y="234" width="2" height="26" fill="#00c800"/><rect x="366" y="234" width="1" height="26" fill="#00ff00"/><rect x="369" y="234" width="2" height="26" fill="#00c800"/><rect x="375" y="234" width="1" height="26" fill="#00ff00"/><rect x="378" y="234" width="1" height="26" fill="#00c800"/><rect x="380" y="234" width="1" height="26" fill="#00ff00"/><rect x="383" y="234" width="1" height="26" fill="#00c800"/><rect x="385" y="234" width="1" height="26" fill="#00ff00"/><rect x="388" y="234" width="2" height="26" fill="#00c800"/><rect x="394" y="234" width="1" height="26" fill="#00ff00"/><rect x="397" y="234" width="1" height="26" fill="#00c800"/><rect x="399" y="234" width="1" height="26" fill="#00ff00"/><rect x="402" y="234" width="2" height="26" fill="#00c800"/><rect x="406" y="234" width="1" height="26" fill="#00ff00"/><rect x="408" y="234" width="1" height="26" fill="#00c800"/><rect x="411" y="234" width="1" height="26" fill="#00ff00"/><rect x="413" y="234" width="1" height="26" fill="#00c800"/><rect x="416" y="234" width="2" height="26" fill="#00ff00"/><rect x="422" y="234" width="1" height="26" fill="#00c800"/><rect x="425" y="234" width="1" height="26" fill="#00ff00"/><rect x="427" y="234" width="1" height="26" fill="#00c800"/><rect x="430" y="234" width="2" height="26" fill="#00ff00"/><rect x="435" y="234" width="2" height="26" fill="#00c800"/><rect x="439" y="234" width="1" height="26" fill="#00ff00"/><rect x="441" y="234" width="1" height="26" fill="#00c800"/><rect x="444" y="234" width="1" height="26" fill="#00ff00"/><rect x="446" y="234" width="1" height="26" fill="#00c800"/><rect x="450" y="234" width="1" height="26" fill="#00ff00"/><rect x="453" y="234" width="1" height="26" fill="#00c800"/><rect x="456" y="234" width="1" height="26" fill="#00ff00"/><rect x="458" y="234" width="1" height="26" fill="#00c800"/><rect x="460" y="234" width="1" height="26" fill="#00ff00"/><rect x="463" y="234" width="2" height="26" fill="#00c800"/><rect x="467" y="234" width="1" height="26" fill="#00ff00"/><rect x="469" y="234" width="1" height="26" fill="#00c800"/><rect x="472" y="234" width="1" height="26" fill="#00ff00"/><rect x="474" y="234" width="1" height="26" fill="#00c800"/><rect x="478" y="234" width="1" height="26" fill="#00ff00"/><rect x="482" y="234" width="2" height="26" fill="#00c800"/><rect x="488" y="234" width="1" height="26" fill="#00ff00"/><rect x="491" y="234" width="1" height="26" fill="#00c800"/><rect x="493" y="234" width="1" height="26" fill="#00ff00"/><rect x="497" y="234" width="1" height="26" fill="#00c800"/><rect x="500" y="234" width="1" height="26" fill="#00ff00"/><rect x="502" y="234" width="1" height="26" fill="#00c800"/><rect x="507" y="234" width="1" height="26" fill="#00ff00"/><rect x="510" y="234" width="2" height="26" fill="#00c800"/><rect x="514" y="234" width="1" height="26" fill="#00ff00"/><rect x="516" y="234" width="1" height="26" fill="#00c800"/><rect x="519" y="234" width="1" height="26" fill="#00ff00"/><rect x="521" y="234" width="1" height="26" fill="#00c800"/><rect x="524" y="234" width="2" height="26" fill="#00ff00"/><rect x="528" y="234" width="1" height="26" fill="#00c800"/><rect x="530" y="234" width="1" height="26" fill="#00ff00"/><rect x="535" y="234" width="1" height="26" fill="#00c800"/><rect x="538" y="234" width="2" height="26" fill="#00ff00"/><rect x="543" y="234" width="2" height="26" fill="#00c800"/><rect x="547" y="234" width="1" height="26" fill="#00ff00"/><rect x="549" y="234" width="1" height="26" fill="#00c800"/><rect x="552" y="234" width="1" height="26" fill="#00ff00"/><rect x="554" y="234" width="1" height="26" fill="#00c800"/><rect x="557" y="234" width="2" height="26" fill="#00ff00"/><rect x="563" y="234" width="1" height="26" fill="#00c800"/><rect x="566" y="234" width="1" height="26" fill="#00ff00"/><rect x="568" y="234" width="1" height="26" fill="#00c800"/><rect x="571" y="234" width="2" height="26" fill="#00ff00"/><rect x="575" y="234" width="1" height="26" fill="#00c800"/><rect x="577" y="234" width="1" height="26" fill="#00ff00"/><rect x="580" y="234" width="1" height="26" fill="#00c800"/><rect x="582" y="234" width="1" height="26" fill="#00ff00"/><rect x="585" y="234" width="2" height="26" fill="#00c800"/><rect x="591" y="234" width="1" height="26" fill="#00ff00"/><rect x="594" y="234" width="1" height="26" fill="#00c800"/><rect x="596" y="234" width="1" height="26" fill="#00ff00"/><rect x="600" y="234" width="1" height="26" fill="#00c800"/><rect x="604" y="234" width="2" height="26" fill="#00ff00"/><rect x="608" y="234" width="1" height="26" fill="#00c800"/><rect x="610" y="234" width="1" height="26" fill="#00ff00"/><rect x="116" y="260" width="1" height="25" fill="#9bffff"/><rect x="121" y="260" width="1" height="25" fill="#00d2f0"/><rect x="126" y="260" width="1" height="25" fill="#9bffff"/><rect x="131" y="260" width="1" height="25" fill="#00d2f0"/><rect x="135" y="260" width="1" height="25" fill="#9bffff"/><rect x="145" y="260" width="1" height="25" fill="#00d2f0"/><rect x="149" y="260" width="1" height="25" fill="#9bffff"/><rect x="154" y="260" width="1" height="25" fill="#00d2f0"/><rect x="159" y="260" width="1" height="25" fill="#9bffff"/><rect x="163" y="260" width="1" height="25" fill="#00d2f0"/><rect x="173" y="260" width="1" height="25" fill="#9bffff"/><rect x="177" y="260" width="1" height="25" fill="#00d2f0"/><rect x="182" y="260" width="1" height="25" fill="#9bffff"/><rect x="187" y="260" width="1" height="25" fill="#00d2f0"/><rect x="192" y="260" width="1" height="25" fill="#9bffff"/><rect x="201" y="260" width="1" height="25" fill="#00d2f0"/><rect x="206" y="260" width="1" height="25" fill="#9bffff"/><rect x="215" y="260" width="1" height="25" fill="#00d2f0"/><rect x="220" y="260" width="1" height="25" fill="#9bffff"/><rect x="229" y="260" width="1" height="25" fill="#00d2f0"/><rect x="234" y="260" width="1" height="25" fill="#9bffff"/><rect x="238" y="260" width="1" height="25" fill="#00d2f0"/><rect x="243" y="260" width="1" height="25" fill="#9bffff"/><rect x="248" y="260" width="1" height="25" fill="#00d2f0"/><rect x="257" y="260" width="1" height="25" fill="#9bffff"/><rect x="262" y="260" width="1" height="25" fill="#00d2f0"/><rect x="267" y="260" width="1" height="25" fill="#9bffff"/><rect x="271" y="260" width="1" height="25" fill="#00d2f0"/><rect x="276" y="260" width="1" height="25" fill="#9bffff"/><rect x="285" y="260" width="1" height="25" fill="#00d2f0"/><rect x="290" y="260" width="1" height="25" fill="#9bffff"/><rect x="295" y="260" width="1" height="25" fill="#00d2f0"/><rect x="299" y="260" width="1" height="25" fill="#9bffff"/><rect x="304" y="260" width="1" height="25" fill="#00d2f0"/><rect x="314" y="260" width="1" height="25" fill="#9bffff"/><rect x="318" y="260" width="1" height="25" fill="#00d2f0"/><rect x="328" y="260" width="1" height="25" fill="#9bffff"/><rect x="332" y="260" width="1" height="25" fill="#00d2f0"/><rect x="342" y="260" width="1" height="25" fill="#9bffff"/><rect x="346" y="260" width="1" height="25" fill="#00d2f0"/><rect x="351" y="260" width="1" height="25" fill="#9bffff"/><rect x="356" y="260" width="1" height="25" fill="#00d2f0"/><rect x="360" y="260" width="1" height="25" fill="#9bffff"/><rect x="370" y="260" width="1" height="25" fill="#00d2f0"/><rect x="375" y="260" width="1" height="25" fill="#9bffff"/><rect x="379" y="260" width="1" height="25" fill="#00d2f0"/><rect x="384" y="260" width="1" height="25" fill="#9bffff"/><rect x="389" y="260" width="1" height="25" fill="#00d2f0"/><rect x="398" y="260" width="1" height="25" fill="#9bffff"/><rect x="403" y="260" width="1" height="25" fill="#00d2f0"/><rect x="407" y="260" width="1" height="25" fill="#9bffff"/><rect x="412" y="260" width="1" height="25" fill="#00d2f0"/><rect x="417" y="260" width="1" height="25" fill="#9bffff"/><rect x="426" y="260" width="1" height="25" fill="#00d2f0"/><rect x="431" y="260" width="1" height="25" fill="#9bffff"/><rect x="440" y="260" width="1" height="25" fill="#00d2f0"/><rect x="445" y="260" width="1" height="25" fill="#9bffff"/><rect x="454" y="260" width="1" height="25" fill="#00d2f0"/><rect x="459" y="260" width="1" height="25" fill="#9bffff"/><rect x="464" y="260" width="1" height="25" fill="#00d2f0"/><rect x="468" y="260" width="1" height="25" fill="#9bffff"/><rect x="473" y="260" width="1" height="25" fill="#00d2f0"/><rect x="483" y="260" width="1" height="25" fill="#9bffff"/><rect x="487" y="260" width="1" height="25" fill="#00d2f0"/><rect x="492" y="260" width="1" height="25" fill="#9bffff"/><rect x="497" y="260" width="1" height="25" fill="#00d2f0"/><rect x="501" y="260" width="1" height="25" fill="#9bffff"/><rect x="511" y="260" width="1" height="25" fill="#00d2f0"/><rect x="515" y="260" width="1" height="25" fill="#9bffff"/><rect x="520" y="260" width="1" height="25" fill="#00d2f0"/><rect x="525" y="260" width="1" height="25" fill="#9bffff"/><rect x="529" y="260" width="1" height="25" fill="#00d2f0"/><rect x="539" y="260" width="1" height="25" fill="#9bffff"/><rect x="544" y="260" width="1" height="25" fill="#00d2f0"/><rect x="553" y="260" width="1" height="25" fill="#9bffff"/><rect x="558" y="260" width="1" height="25" fill="#00d2f0"/><rect x="567" y="260" width="1" height="25" fill="#9bffff"/><rect x="572" y="260" width="1" height="25" fill="#00d2f0"/><rect x="576" y="260" width="1" height="25" fill="#9bffff"/><rect x="581" y="260" width="1" height="25" fill="#00d2f0"/><rect x="586" y="260" width="1" height="25" fill="#9bffff"/><rect x="595" y="260" width="1" height="25" fill="#00d2f0"/><rect x="600" y="260" width="1" height="25" fill="#9bffff"/><rect x="605" y="260" width="1" height="25" fill="#00d2f0"/><rect x="609" y="260" width="1" height="25" fill="#9bffff"/><rect x="209" y="285" width="1" height="26" fill="#9bffff"/><rect x="322" y="285" width="1" height="26" fill="#00d2f0"/><rect x="435" y="285" width="1" height="26" fill="#9bffff"/><rect x="547" y="285" width="1" height="26" fill="#00d2f0"/><defs><pattern id="ys" x="0" y="0" width="2" height="4" patternUnits="userSpaceOnUse"><rect x="0" y="0" width="1" height="4" fill="#ffff00"/><rect x="1" y="0" width="1" height="4" fill="#c8c800"/></pattern></defs><rect x="112" y="311" width="27" height="25" fill="url(#ys)"/><rect x="140" y="311" width="8" height="25" fill="url(#ys)"/><rect x="149" y="311" width="7" height="25" fill="url(#ys)"/><rect x="157" y="311" width="10" height="25" fill="url(#ys)"/><rect x="169" y="311" width="26" height="25" fill="url(#ys)"/><rect x="197" y="311" width="26" height="25" fill="url(#ys)"/><rect x="225" y="311" width="26" height="25" fill="url(#ys)"/><rect x="253" y="311" width="16" height="25" fill="url(#ys)"/><rect x="271" y="311" width="8" height="25" fill="url(#ys)"/><rect x="281" y="311" width="27" height="25" fill="url(#ys)"/><rect x="309" y="311" width="27" height="25" fill="url(#ys)"/><rect x="337" y="311" width="27" height="25" fill="url(#ys)"/><rect x="366" y="311" width="7" height="25" fill="url(#ys)"/><rect x="374" y="311" width="9" height="25" fill="url(#ys)"/><rect x="384" y="311" width="8" height="25" fill="url(#ys)"/><rect x="393" y="311" width="27" height="25" fill="url(#ys)"/><rect x="422" y="311" width="26" height="25" fill="url(#ys)"/><rect x="450" y="311" width="26" height="25" fill="url(#ys)"/><rect x="478" y="311" width="8" height="25" fill="url(#ys)"/><rect x="487" y="311" width="7" height="25" fill="url(#ys)"/><rect x="496" y="311" width="9" height="25" fill="url(#ys)"/><rect x="506" y="311" width="27" height="25" fill="url(#ys)"/><rect x="535" y="311" width="26" height="25" fill="url(#ys)"/><rect x="563" y="311" width="26" height="25" fill="url(#ys)"/><rect x="591" y="311" width="7" height="25" fill="url(#ys)"/><rect x="599" y="311" width="8" height="25" fill="url(#ys)"/><rect x="608" y="311" width="5" height="25" fill="url(#ys)"/><rect x="156" y="336" width="2" height="26" fill="#9bffff"/><rect x="268" y="336" width="2" height="26" fill="#00d2f0"/><rect x="381" y="336" width="2" height="26" fill="#9bffff"/><rect x="494" y="336" width="1" height="26" fill="#00d2f0"/><rect x="606" y="336" width="2" height="26" fill="#9bffff"/><rect x="260" y="362" width="1" height="26" fill="#00ff00"/><rect x="485" y="362" width="1" height="26" fill="#00c800"/><rect x="268" y="388" width="1" height="25" fill="#9bffff"/><rect x="494" y="388" width="1" height="25" fill="#00d2f0"/><rect x="114" y="427" width="1" height="1" fill="#ffffff"/><rect x="120" y="427" width="1" height="1" fill="#ffffff"/><rect x="126" y="427" width="1" height="1" fill="#ffffff"/><rect x="132" y="427" width="1" height="1" fill="#ffffff"/><rect x="138" y="427" width="1" height="1" fill="#ffffff"/><rect x="144" y="427" width="1" height="1" fill="#ffffff"/><rect x="150" y="427" width="1" height="1" fill="#ffffff"/><rect x="156" y="427" width="1" height="1" fill="#ffffff"/><rect x="162" y="427" width="1" height="1" fill="#ffffff"/><rect x="168" y="427" width="1" height="1" fill="#ffffff"/><rect x="174" y="427" width="1" height="1" fill="#ffffff"/><rect x="180" y="427" width="1" height="1" fill="#ffffff"/><rect x="186" y="427" width="1" height="1" fill="#ffffff"/><rect x="192" y="427" width="1" height="1" fill="#ffffff"/><rect x="198" y="427" width="1" height="1" fill="#ffffff"/><rect x="204" y="427" width="1" height="1" fill="#ffffff"/><rect x="210" y="427" width="1" height="1" fill="#ffffff"/><rect x="216" y="427" width="1" height="1" fill="#ffffff"/><rect x="222" y="427" width="1" height="1" fill="#ffffff"/><rect x="228" y="427" width="1" height="1" fill="#ffffff"/><rect x="234" y="427" width="1" height="1" fill="#ffffff"/><rect x="240" y="427" width="1" height="1" fill="#ffffff"/><rect x="246" y="427" width="1" height="1" fill="#ffffff"/><rect x="252" y="427" width="1" height="1" fill="#ffffff"/><rect x="258" y="427" width="1" height="1" fill="#ffffff"/><rect x="264" y="427" width="1" height="1" fill="#ffffff"/><rect x="270" y="427" width="1" height="1" fill="#ffffff"/><rect x="276" y="427" width="1" height="1" fill="#ffffff"/><rect x="282" y="427" width="1" height="1" fill="#ffffff"/><rect x="288" y="427" width="1" height="1" fill="#ffffff"/><rect x="294" y="427" width="1" height="1" fill="#ffffff"/><rect x="300" y="427" width="1" height="1" fill="#ffffff"/><rect x="306" y="427" width="1" height="1" fill="#ffffff"/><rect x="312" y="427" width="1" height="1" fill="#ffffff"/><rect x="318" y="427" width="1" height="1" fill="#ffffff"/><rect x="324" y="427" width="1" height="1" fill="#ffffff"/><rect x="330" y="427" width="1" height="1" fill="#ffffff"/><rect x="336" y="427" width="1" height="1" fill="#ffffff"/><rect x="342" y="427" width="1" height="1" fill="#ffffff"/><rect x="348" y="427" width="1" height="1" fill="#ffffff"/><rect x="354" y="427" width="1" height="1" fill="#ffffff"/><rect x="360" y="427" width="1" height="1" fill="#ffffff"/><rect x="366" y="427" width="1" height="1" fill="#ffffff"/><rect x="372" y="427" width="1" height="1" fill="#ffffff"/><rect x="378" y="427" width="1" height="1" fill="#ffffff"/><rect x="384" y="427" width="1" height="1" fill="#ffffff"/><rect x="390" y="427" width="1" height="1" fill="#ffffff"/><rect x="396" y="427" width="1" height="1" fill="#ffffff"/><rect x="402" y="427" width="1" height="1" fill="#ffffff"/><rect x="408" y="427" width="1" height="1" fill="#ffffff"/><rect x="414" y="427" width="1" height="1" fill="#ffffff"/><rect x="420" y="427" width="1" height="1" fill="#ffffff"/><rect x="426" y="427" width="1" height="1" fill="#ffffff"/><rect x="432" y="427" width="1" height="1" fill="#ffffff"/><rect x="438" y="427" width="1" height="1" fill="#ffffff"/><rect x="444" y="427" width="1" height="1" fill="#ffffff"/><rect x="450" y="427" width="1" height="1" fill="#ffffff"/><rect x="456" y="427" width="1" height="1" fill="#ffffff"/><rect x="462" y="427" width="1" height="1" fill="#ffffff"/><rect x="468" y="427" width="1" height="1" fill="#ffffff"/><rect x="474" y="427" width="1" height="1" fill="#ffffff"/><rect x="480" y="427" width="1" height="1" fill="#ffffff"/><rect x="486" y="427" width="1" height="1" fill="#ffffff"/><rect x="492" y="427" width="1" height="1" fill="#ffffff"/><rect x="498" y="427" width="1" height="1" fill="#ffffff"/><rect x="504" y="427" width="1" height="1" fill="#ffffff"/><rect x="510" y="427" width="1" height="1" fill="#ffffff"/><rect x="516" y="427" width="1" height="1" fill="#ffffff"/><rect x="522" y="427" width="1" height="1" fill="#ffffff"/><rect x="528" y="427" width="1" height="1" fill="#ffffff"/><rect x="534" y="427" width="1" height="1" fill="#ffffff"/><rect x="540" y="427" width="1" height="1" fill="#ffffff"/><rect x="546" y="427" width="1" height="1" fill="#ffffff"/><rect x="552" y="427" width="1" height="1" fill="#ffffff"/><rect x="558" y="427" width="1" height="1" fill="#ffffff"/><rect x="564" y="427" width="1" height="1" fill="#ffffff"/><rect x="570" y="427" width="1" height="1" fill="#ffffff"/><rect x="576" y="427" width="1" height="1" fill="#ffffff"/><rect x="582" y="427" width="1" height="1" fill="#ffffff"/><rect x="588" y="427" width="1" height="1" fill="#ffffff"/><rect x="594" y="427" width="1" height="1" fill="#ffffff"/><rect x="600" y="427" width="1" height="1" fill="#ffffff"/><rect x="606" y="427" width="1" height="1" fill="#ffffff"/><rect x="612" y="427" width="1" height="1" fill="#ffffff"/><rect x="618" y="427" width="1" height="1" fill="#ffffff"/><rect x="624" y="427" width="1" height="1" fill="#ffffff"/><rect x="630" y="427" width="1" height="1" fill="#ffffff"/><rect x="636" y="427" width="1" height="1" fill="#ffffff"/><rect x="642" y="427" width="1" height="1" fill="#ffffff"/><rect x="648" y="427" width="1" height="1" fill="#ffffff"/><rect x="654" y="427" width="1" height="1" fill="#ffffff"/><rect x="660" y="427" width="1" height="1" fill="#ffffff"/><rect x="666" y="427" width="1" height="1" fill="#ffffff"/><rect x="114" y="439" width="1" height="1" fill="#ffffff"/><rect x="120" y="439" width="1" height="1" fill="#ffffff"/><rect x="126" y="439" width="1" height="1" fill="#ffffff"/><rect x="132" y="439" width="1" height="1" fill="#ffffff"/><rect x="138" y="439" width="1" height="1" fill="#ffffff"/><rect x="144" y="439" width="1" height="1" fill="#ffffff"/><rect x="150" y="439" width="1" height="1" fill="#ffffff"/><rect x="156" y="439" width="1" height="1" fill="#ffffff"/><rect x="162" y="439" width="1" height="1" fill="#ffffff"/><rect x="168" y="439" width="1" height="1" fill="#ffffff"/><rect x="174" y="439" width="1" height="1" fill="#ffffff"/><rect x="180" y="439" width="1" height="1" fill="#ffffff"/><rect x="186" y="439" width="1" height="1" fill="#ffffff"/><rect x="192" y="439" width="1" height="1" fill="#ffffff"/><rect x="198" y="439" width="1" height="1" fill="#ffffff"/><rect x="204" y="439" width="1" height="1" fill="#ffffff"/><rect x="210" y="439" width="1" height="1" fill="#ffffff"/><rect x="216" y="439" width="1" height="1" fill="#ffffff"/><rect x="222" y="439" width="1" height="1" fill="#ffffff"/><rect x="228" y="439" width="1" height="1" fill="#ffffff"/><rect x="234" y="439" width="1" height="1" fill="#ffffff"/><rect x="240" y="439" width="1" height="1" fill="#ffffff"/><rect x="246" y="439" width="1" height="1" fill="#ffffff"/><rect x="252" y="439" width="1" height="1" fill="#ffffff"/><rect x="258" y="439" width="1" height="1" fill="#ffffff"/><rect x="264" y="439" width="1" height="1" fill="#ffffff"/><rect x="270" y="439" width="1" height="1" fill="#ffffff"/><rect x="276" y="439" width="1" height="1" fill="#ffffff"/><rect x="282" y="439" width="1" height="1" fill="#ffffff"/><rect x="288" y="439" width="1" height="1" fill="#ffffff"/><rect x="294" y="439" width="1" height="1" fill="#ffffff"/><rect x="300" y="439" width="1" height="1" fill="#ffffff"/><rect x="306" y="439" width="1" height="1" fill="#ffffff"/><rect x="312" y="439" width="1" height="1" fill="#ffffff"/><rect x="318" y="439" width="1" height="1" fill="#ffffff"/><rect x="324" y="439" width="1" height="1" fill="#ffffff"/><rect x="330" y="439" width="1" height="1" fill="#ffffff"/><rect x="336" y="439" width="1" height="1" fill="#ffffff"/><rect x="342" y="439" width="1" height="1" fill="#ffffff"/><rect x="348" y="439" width="1" height="1" fill="#ffffff"/><rect x="354" y="439" width="1" height="1" fill="#ffffff"/><rect x="360" y="439" width="1" height="1" fill="#ffffff"/><rect x="366" y="439" width="1" height="1" fill="#ffffff"/><rect x="372" y="439" width="1" height="1" fill="#ffffff"/><rect x="378" y="439" width="1" height="1" fill="#ffffff"/><rect x="384" y="439" width="1" height="1" fill="#ffffff"/><rect x="390" y="439" width="1" height="1" fill="#ffffff"/><rect x="396" y="439" width="1" height="1" fill="#ffffff"/><rect x="402" y="439" width="1" height="1" fill="#ffffff"/><rect x="408" y="439" width="1" height="1" fill="#ffffff"/><rect x="414" y="439" width="1" height="1" fill="#ffffff"/><rect x="420" y="439" width="1" height="1" fill="#ffffff"/><rect x="426" y="439" width="1" height="1" fill="#ffffff"/><rect x="432" y="439" width="1" height="1" fill="#ffffff"/><rect x="438" y="439" width="1" height="1" fill="#ffffff"/><rect x="444" y="439" width="1" height="1" fill="#ffffff"/><rect x="450" y="439" width="1" height="1" fill="#ffffff"/><rect x="456" y="439" width="1" height="1" fill="#ffffff"/><rect x="462" y="439" width="1" height="1" fill="#ffffff"/><rect x="468" y="439" width="1" height="1" fill="#ffffff"/><rect x="474" y="439" width="1" height="1" fill="#ffffff"/><rect x="480" y="439" width="1" height="1" fill="#ffffff"/><rect x="486" y="439" width="1" height="1" fill="#ffffff"/><rect x="492" y="439" width="1" height="1" fill="#ffffff"/><rect x="498" y="439" width="1" height="1" fill="#ffffff"/><rect x="504" y="439" width="1" height="1" fill="#ffffff"/><rect x="510" y="439" width="1" height="1" fill="#ffffff"/><rect x="516" y="439" width="1" height="1" fill="#ffffff"/><rect x="522" y="439" width="1" height="1" fill="#ffffff"/><rect x="528" y="439" width="1" height="1" fill="#ffffff"/><rect x="534" y="439" width="1" height="1" fill="#ffffff"/><rect x="540" y="439" width="1" height="1" fill="#ffffff"/><rect x="546" y="439" width="1" height="1" fill="#ffffff"/><rect x="552" y="439" width="1" height="1" fill="#ffffff"/><rect x="558" y="439" width="1" height="1" fill="#ffffff"/><rect x="564" y="439" width="1" height="1" fill="#ffffff"/><rect x="570" y="439" width="1" height="1" fill="#ffffff"/><rect x="576" y="439" width="1" height="1" fill="#ffffff"/><rect x="582" y="439" width="1" height="1" fill="#ffffff"/><rect x="588" y="439" width="1" height="1" fill="#ffffff"/><rect x="594" y="439" width="1" height="1" fill="#ffffff"/><rect x="600" y="439" width="1" height="1" fill="#ffffff"/><rect x="606" y="439" width="1" height="1" fill="#ffffff"/><rect x="612" y="439" width="1" height="1" fill="#ffffff"/><rect x="618" y="439" width="1" height="1" fill="#ffffff"/><rect x="624" y="439" width="1" height="1" fill="#ffffff"/><rect x="630" y="439" width="1" height="1" fill="#ffffff"/><rect x="636" y="439" width="1" height="1" fill="#ffffff"/><rect x="642" y="439" width="1" height="1" fill="#ffffff"/><rect x="648" y="439" width="1" height="1" fill="#ffffff"/><rect x="654" y="439" width="1" height="1" fill="#ffffff"/><rect x="660" y="439" width="1" height="1" fill="#ffffff"/><rect x="666" y="439" width="1" height="1" fill="#ffffff"/><rect x="114" y="472" width="1" height="1" fill="#ffffff"/><rect x="120" y="472" width="1" height="1" fill="#ffffff"/><rect x="126" y="472" width="1" height="1" fill="#ffffff"/><rect x="132" y="472" width="1" height="1" fill="#ffffff"/><rect x="138" y="472" width="1" height="1" fill="#ffffff"/><rect x="144" y="472" width="1" height="1" fill="#ffffff"/><rect x="150" y="472" width="1" height="1" fill="#ffffff"/><rect x="156" y="472" width="1" height="1" fill="#ffffff"/><rect x="162" y="472" width="1" height="1" fill="#ffffff"/><rect x="168" y="472" width="1" height="1" fill="#ffffff"/><rect x="174" y="472" width="1" height="1" fill="#ffffff"/><rect x="180" y="472" width="1" height="1" fill="#ffffff"/><rect x="186" y="472" width="1" height="1" fill="#ffffff"/><rect x="192" y="472" width="1" height="1" fill="#ffffff"/><rect x="198" y="472" width="1" height="1" fill="#ffffff"/><rect x="204" y="472" width="1" height="1" fill="#ffffff"/><rect x="210" y="472" width="1" height="1" fill="#ffffff"/><rect x="216" y="472" width="1" height="1" fill="#ffffff"/><rect x="222" y="472" width="1" height="1" fill="#ffffff"/><rect x="228" y="472" width="1" height="1" fill="#ffffff"/><rect x="234" y="472" width="1" height="1" fill="#ffffff"/><rect x="240" y="472" width="1" height="1" fill="#ffffff"/><rect x="246" y="472" width="1" height="1" fill="#ffffff"/><rect x="252" y="472" width="1" height="1" fill="#ffffff"/><rect x="258" y="472" width="1" height="1" fill="#ffffff"/><rect x="264" y="472" width="1" height="1" fill="#ffffff"/><rect x="270" y="472" width="1" height="1" fill="#ffffff"/><rect x="276" y="472" width="1" height="1" fill="#ffffff"/><rect x="282" y="472" width="1" height="1" fill="#ffffff"/><rect x="288" y="472" width="1" height="1" fill="#ffffff"/><rect x="294" y="472" width="1" height="1" fill="#ffffff"/><rect x="300" y="472" width="1" height="1" fill="#ffffff"/><rect x="306" y="472" width="1" height="1" fill="#ffffff"/><rect x="312" y="472" width="1" height="1" fill="#ffffff"/><rect x="318" y="472" width="1" height="1" fill="#ffffff"/><rect x="324" y="472" width="1" height="1" fill="#ffffff"/><rect x="330" y="472" width="1" height="1" fill="#ffffff"/><rect x="336" y="472" width="1" height="1" fill="#ffffff"/><rect x="342" y="472" width="1" height="1" fill="#ffffff"/><rect x="348" y="472" width="1" height="1" fill="#ffffff"/><rect x="354" y="472" width="1" height="1" fill="#ffffff"/><rect x="360" y="472" width="1" height="1" fill="#ffffff"/><rect x="366" y="472" width="1" height="1" fill="#ffffff"/><rect x="372" y="472" width="1" height="1" fill="#ffffff"/><rect x="378" y="472" width="1" height="1" fill="#ffffff"/><rect x="384" y="472" width="1" height="1" fill="#ffffff"/><rect x="390" y="472" width="1" height="1" fill="#ffffff"/><rect x="396" y="472" width="1" height="1" fill="#ffffff"/><rect x="402" y="472" width="1" height="1" fill="#ffffff"/><rect x="408" y="472" width="1" height="1" fill="#ffffff"/><rect x="414" y="472" width="1" height="1" fill="#ffffff"/><rect x="420" y="472" width="1" height="1" fill="#ffffff"/><rect x="426" y="472" width="1" height="1" fill="#ffffff"/><rect x="432" y="472" width="1" height="1" fill="#ffffff"/><rect x="438" y="472" width="1" height="1" fill="#ffffff"/><rect x="444" y="472" width="1" height="1" fill="#ffffff"/><rect x="450" y="472" width="1" height="1" fill="#ffffff"/><rect x="456" y="472" width="1" height="1" fill="#ffffff"/><rect x="462" y="472" width="1" height="1" fill="#ffffff"/><rect x="468" y="472" width="1" height="1" fill="#ffffff"/><rect x="474" y="472" width="1" height="1" fill="#ffffff"/><rect x="480" y="472" width="1" height="1" fill="#ffffff"/><rect x="486" y="472" width="1" height="1" fill="#ffffff"/><rect x="492" y="472" width="1" height="1" fill="#ffffff"/><rect x="498" y="472" width="1" height="1" fill="#ffffff"/><rect x="504" y="472" width="1" height="1" fill="#ffffff"/><rect x="510" y="472" width="1" height="1" fill="#ffffff"/><rect x="516" y="472" width="1" height="1" fill="#ffffff"/><rect x="522" y="472" width="1" height="1" fill="#ffffff"/><rect x="528" y="472" width="1" height="1" fill="#ffffff"/><rect x="534" y="472" width="1" height="1" fill="#ffffff"/><rect x="540" y="472" width="1" height="1" fill="#ffffff"/><rect x="546" y="472" width="1" height="1" fill="#ffffff"/><rect x="552" y="472" width="1" height="1" fill="#ffffff"/><rect x="558" y="472" width="1" height="1" fill="#ffffff"/><rect x="564" y="472" width="1" height="1" fill="#ffffff"/><rect x="570" y="472" width="1" height="1" fill="#ffffff"/><rect x="576" y="472" width="1" height="1" fill="#ffffff"/><rect x="582" y="472" width="1" height="1" fill="#ffffff"/><rect x="588" y="472" width="1" height="1" fill="#ffffff"/><rect x="594" y="472" width="1" height="1" fill="#ffffff"/><rect x="600" y="472" width="1" height="1" fill="#ffffff"/><rect x="606" y="472" width="1" height="1" fill="#ffffff"/><rect x="612" y="472" width="1" height="1" fill="#ffffff"/><rect x="618" y="472" width="1" height="1" fill="#ffffff"/><rect x="624" y="472" width="1" height="1" fill="#ffffff"/><rect x="630" y="472" width="1" height="1" fill="#ffffff"/><rect x="636" y="472" width="1" height="1" fill="#ffffff"/><rect x="642" y="472" width="1" height="1" fill="#ffffff"/><rect x="648" y="472" width="1" height="1" fill="#ffffff"/><rect x="654" y="472" width="1" height="1" fill="#ffffff"/><rect x="660" y="472" width="1" height="1" fill="#ffffff"/><rect x="666" y="472" width="1" height="1" fill="#ffffff"/><rect x="120" y="479" width="1" height="5" fill="#ffffff"/><rect x="167" y="479" width="1" height="5" fill="#ffffff"/><rect x="190" y="479" width="1" height="5" fill="#ffffff"/><rect x="214" y="479" width="1" height="5" fill="#ffffff"/><rect x="261" y="479" width="1" height="5" fill="#ffffff"/><rect x="284" y="479" width="1" height="5" fill="#ffffff"/><rect x="308" y="479" width="1" height="5" fill="#ffffff"/><rect x="355" y="479" width="1" height="5" fill="#ffffff"/><rect x="378" y="479" width="1" height="5" fill="#ffffff"/><rect x="402" y="479" width="1" height="5" fill="#ffffff"/><rect x="448" y="479" width="1" height="5" fill="#ffffff"/><rect x="472" y="479" width="1" height="5" fill="#ffffff"/><rect x="496" y="479" width="1" height="5" fill="#ffffff"/><rect x="542" y="479" width="1" height="5" fill="#ffffff"/><rect x="566" y="479" width="1" height="5" fill="#ffffff"/><rect x="590" y="479" width="1" height="5" fill="#ffffff"/><rect x="636" y="479" width="1" height="5" fill="#ffffff"/><rect x="660" y="479" width="1" height="5" fill="#ffffff"/><rect x="143" y="474" width="1" height="10" fill="#ffffff"/><rect x="237" y="474" width="1" height="10" fill="#ffffff"/><rect x="331" y="474" width="1" height="10" fill="#ffffff"/><rect x="425" y="474" width="1" height="10" fill="#ffffff"/><rect x="519" y="474" width="1" height="10" fill="#ffffff"/><rect x="613" y="474" width="1" height="10" fill="#ffffff"/><rect x="109" y="454" width="1" height="30" fill="#ffffff"/><rect x="110" y="454" width="1" height="30" fill="#ffffff"/><rect x="111" y="445" width="1" height="39" fill="#ffffff"/><rect x="112" y="432" width="1" height="52" fill="#ffffff"/><rect x="113" y="432" width="1" height="52" fill="#ffffff"/><rect x="114" y="432" width="1" height="52" fill="#ffffff"/><rect x="115" y="432" width="1" height="52" fill="#ffffff"/><rect x="116" y="437" width="1" height="47" fill="#ffffff"/><rect x="117" y="440" width="1" height="44" fill="#ffffff"/><rect x="118" y="442" width="1" height="42" fill="#ffffff"/><rect x="119" y="445" width="1" height="39" fill="#ffffff"/><rect x="120" y="446" width="1" height="38" fill="#ffffff"/><rect x="121" y="451" width="1" height="33" fill="#ffffff"/><rect x="122" y="451" width="1" height="33" fill="#ffffff"/><rect x="123" y="451" width="1" height="33" fill="#ffffff"/><rect x="124" y="454" width="1" height="30" fill="#ffffff"/><rect x="125" y="458" width="1" height="26" fill="#ffffff"/><rect x="126" y="458" width="1" height="26" fill="#ffffff"/><rect x="127" y="463" width="1" height="21" fill="#ffffff"/><rect x="128" y="463" width="1" height="21" fill="#ffffff"/><rect x="129" y="463" width="1" height="21" fill="#ffffff"/><rect x="130" y="471" width="1" height="13" fill="#ffffff"/><rect x="131" y="471" width="1" height="13" fill="#ffffff"/><rect x="132" y="471" width="1" height="13" fill="#ffffff"/><rect x="133" y="473" width="1" height="11" fill="#ffffff"/><rect x="134" y="476" width="1" height="8" fill="#ffffff"/><rect x="135" y="483" width="1" height="1" fill="#ff0000"/><rect x="136" y="483" width="1" height="1" fill="#ff0000"/><rect x="137" y="483" width="1" height="1" fill="#ff0000"/><rect x="138" y="465" width="1" height="19" fill="#ffffff"/><rect x="139" y="462" width="1" height="22" fill="#ffffff"/><rect x="140" y="453" width="1" height="31" fill="#ffffff"/><rect x="141" y="451" width="1" height="33" fill="#ffffff"/><rect x="142" y="451" width="1" height="33" fill="#ffffff"/><rect x="143" y="451" width="1" height="33" fill="#ffffff"/><rect x="144" y="458" width="1" height="26" fill="#ffffff"/><rect x="145" y="458" width="1" height="26" fill="#ffffff"/><rect x="146" y="461" width="1" height="23" fill="#ffffff"/><rect x="147" y="461" width="1" height="23" fill="#ffffff"/><rect x="148" y="456" width="1" height="28" fill="#ffffff"/><rect x="149" y="456" width="1" height="28" fill="#ffffff"/><rect x="150" y="458" width="1" height="26" fill="#ffffff"/><rect x="151" y="458" width="1" height="26" fill="#ffffff"/><rect x="152" y="461" width="1" height="23" fill="#ffffff"/><rect x="153" y="468" width="1" height="16" fill="#ffffff"/><rect x="154" y="468" width="1" height="16" fill="#ffffff"/><rect x="155" y="468" width="1" height="16" fill="#ffffff"/><rect x="156" y="473" width="1" height="11" fill="#ffffff"/><rect x="157" y="473" width="1" height="11" fill="#ffffff"/><rect x="158" y="473" width="1" height="11" fill="#ffffff"/><rect x="159" y="483" width="1" height="1" fill="#ff0000"/><rect x="160" y="483" width="1" height="1" fill="#ff0000"/><rect x="161" y="473" width="1" height="11" fill="#ffffff"/><rect x="162" y="473" width="1" height="11" fill="#ffffff"/><rect x="163" y="483" width="1" height="1" fill="#ff0000"/><rect x="164" y="483" width="1" height="1" fill="#ff0000"/><rect x="165" y="471" width="1" height="13" fill="#ffffff"/><rect x="166" y="471" width="1" height="13" fill="#ffffff"/><rect x="167" y="470" width="1" height="14" fill="#ffffff"/><rect x="168" y="459" width="1" height="25" fill="#ffffff"/><rect x="169" y="451" width="1" height="33" fill="#ffffff"/><rect x="170" y="451" width="1" height="33" fill="#ffffff"/><rect x="171" y="451" width="1" height="33" fill="#ffffff"/><rect x="172" y="458" width="1" height="26" fill="#ffffff"/><rect x="173" y="458" width="1" height="26" fill="#ffffff"/><rect x="174" y="461" width="1" height="23" fill="#ffffff"/><rect x="175" y="461" width="1" height="23" fill="#ffffff"/><rect x="176" y="461" width="1" height="23" fill="#ffffff"/><rect x="177" y="469" width="1" height="15" fill="#ffffff"/><rect x="178" y="471" width="1" height="13" fill="#ffffff"/><rect x="179" y="471" width="1" height="13" fill="#ffffff"/><rect x="180" y="471" width="1" height="13" fill="#ffffff"/><rect x="181" y="473" width="1" height="11" fill="#ffffff"/><rect x="182" y="479" width="1" height="5" fill="#ffffff"/><rect x="183" y="479" width="1" height="5" fill="#ffffff"/><rect x="184" y="483" width="1" height="1" fill="#ff0000"/><rect x="185" y="473" width="1" height="11" fill="#ffffff"/><rect x="186" y="483" width="1" height="1" fill="#ff0000"/><rect x="187" y="483" width="1" height="1" fill="#ff0000"/><rect x="188" y="473" width="1" height="11" fill="#ffffff"/><rect x="189" y="473" width="1" height="11" fill="#ffffff"/><rect x="190" y="479" width="1" height="5" fill="#ffffff"/><rect x="191" y="483" width="1" height="1" fill="#ff0000"/><rect x="192" y="483" width="1" height="1" fill="#ff0000"/><rect x="193" y="483" width="1" height="1" fill="#ff0000"/><rect x="194" y="472" width="1" height="12" fill="#ffffff"/><rect x="195" y="470" width="1" height="14" fill="#ffffff"/><rect x="196" y="459" width="1" height="25" fill="#ffffff"/><rect x="197" y="451" width="1" height="33" fill="#ffffff"/><rect x="198" y="451" width="1" height="33" fill="#ffffff"/><rect x="199" y="451" width="1" height="33" fill="#ffffff"/><rect x="200" y="458" width="1" height="26" fill="#ffffff"/><rect x="201" y="458" width="1" height="26" fill="#ffffff"/><rect x="202" y="461" width="1" height="23" fill="#ffffff"/><rect x="203" y="461" width="1" height="23" fill="#ffffff"/><rect x="204" y="461" width="1" height="23" fill="#ffffff"/><rect x="205" y="469" width="1" height="15" fill="#ffffff"/><rect x="206" y="471" width="1" height="13" fill="#ffffff"/><rect x="207" y="471" width="1" height="13" fill="#ffffff"/><rect x="208" y="471" width="1" height="13" fill="#ffffff"/><rect x="209" y="473" width="1" height="11" fill="#ffffff"/><rect x="210" y="479" width="1" height="5" fill="#ffffff"/><rect x="211" y="479" width="1" height="5" fill="#ffffff"/><rect x="212" y="483" width="1" height="1" fill="#ff0000"/><rect x="213" y="473" width="1" height="11" fill="#ffffff"/><rect x="214" y="483" width="1" height="1" fill="#ff0000"/><rect x="215" y="483" width="1" height="1" fill="#ff0000"/><rect x="216" y="473" width="1" height="11" fill="#ffffff"/><rect x="217" y="473" width="1" height="11" fill="#ffffff"/><rect x="218" y="479" width="1" height="5" fill="#ffffff"/><rect x="219" y="483" width="1" height="1" fill="#ff0000"/><rect x="220" y="483" width="1" height="1" fill="#ff0000"/><rect x="221" y="483" width="1" height="1" fill="#ff0000"/><rect x="222" y="472" width="1" height="12" fill="#ffffff"/><rect x="223" y="470" width="1" height="14" fill="#ffffff"/><rect x="224" y="459" width="1" height="25" fill="#ffffff"/><rect x="225" y="451" width="1" height="33" fill="#ffffff"/><rect x="226" y="451" width="1" height="33" fill="#ffffff"/><rect x="227" y="451" width="1" height="33" fill="#ffffff"/><rect x="228" y="458" width="1" height="26" fill="#ffffff"/><rect x="229" y="458" width="1" height="26" fill="#ffffff"/><rect x="230" y="461" width="1" height="23" fill="#ffffff"/><rect x="231" y="461" width="1" height="23" fill="#ffffff"/><rect x="232" y="461" width="1" height="23" fill="#ffffff"/><rect x="233" y="469" width="1" height="15" fill="#ffffff"/><rect x="234" y="471" width="1" height="13" fill="#ffffff"/><rect x="235" y="471" width="1" height="13" fill="#ffffff"/><rect x="236" y="471" width="1" height="13" fill="#ffffff"/><rect x="237" y="473" width="1" height="11" fill="#ffffff"/><rect x="238" y="479" width="1" height="5" fill="#ffffff"/><rect x="239" y="479" width="1" height="5" fill="#ffffff"/><rect x="240" y="483" width="1" height="1" fill="#ff0000"/><rect x="241" y="473" width="1" height="11" fill="#ffffff"/><rect x="242" y="483" width="1" height="1" fill="#ff0000"/><rect x="243" y="483" width="1" height="1" fill="#ff0000"/><rect x="244" y="473" width="1" height="11" fill="#ffffff"/><rect x="245" y="473" width="1" height="11" fill="#ffffff"/><rect x="246" y="479" width="1" height="5" fill="#ffffff"/><rect x="247" y="483" width="1" height="1" fill="#ff0000"/><rect x="248" y="483" width="1" height="1" fill="#ff0000"/><rect x="249" y="483" width="1" height="1" fill="#ff0000"/><rect x="250" y="472" width="1" height="12" fill="#ffffff"/><rect x="251" y="464" width="1" height="20" fill="#ffffff"/><rect x="252" y="451" width="1" height="33" fill="#ffffff"/><rect x="253" y="451" width="1" height="33" fill="#ffffff"/><rect x="254" y="451" width="1" height="33" fill="#ffffff"/><rect x="255" y="451" width="1" height="33" fill="#ffffff"/><rect x="256" y="461" width="1" height="23" fill="#ffffff"/><rect x="257" y="461" width="1" height="23" fill="#ffffff"/><rect x="258" y="462" width="1" height="22" fill="#ffffff"/><rect x="259" y="462" width="1" height="22" fill="#ffffff"/><rect x="260" y="456" width="1" height="28" fill="#ffffff"/><rect x="261" y="458" width="1" height="26" fill="#ffffff"/><rect x="262" y="458" width="1" height="26" fill="#ffffff"/><rect x="263" y="461" width="1" height="23" fill="#ffffff"/><rect x="264" y="461" width="1" height="23" fill="#ffffff"/><rect x="265" y="467" width="1" height="17" fill="#ffffff"/><rect x="266" y="467" width="1" height="17" fill="#ffffff"/><rect x="267" y="473" width="1" height="11" fill="#ffffff"/><rect x="268" y="473" width="1" height="11" fill="#ffffff"/><rect x="269" y="483" width="1" height="1" fill="#ff0000"/><rect x="270" y="473" width="1" height="11" fill="#ffffff"/><rect x="271" y="473" width="1" height="11" fill="#ffffff"/><rect x="272" y="483" width="1" height="1" fill="#ff0000"/><rect x="273" y="483" width="1" height="1" fill="#ff0000"/><rect x="274" y="473" width="1" height="11" fill="#ffffff"/><rect x="275" y="473" width="1" height="11" fill="#ffffff"/><rect x="276" y="483" width="1" height="1" fill="#ff0000"/><rect x="277" y="473" width="1" height="11" fill="#ffffff"/><rect x="278" y="471" width="1" height="13" fill="#ffffff"/><rect x="279" y="470" width="1" height="14" fill="#ffffff"/><rect x="280" y="459" width="1" height="25" fill="#ffffff"/><rect x="281" y="451" width="1" height="33" fill="#ffffff"/><rect x="282" y="451" width="1" height="33" fill="#ffffff"/><rect x="283" y="451" width="1" height="33" fill="#ffffff"/><rect x="284" y="458" width="1" height="26" fill="#ffffff"/><rect x="285" y="458" width="1" height="26" fill="#ffffff"/><rect x="286" y="461" width="1" height="23" fill="#ffffff"/><rect x="287" y="461" width="1" height="23" fill="#ffffff"/><rect x="288" y="461" width="1" height="23" fill="#ffffff"/><rect x="289" y="469" width="1" height="15" fill="#ffffff"/><rect x="290" y="471" width="1" height="13" fill="#ffffff"/><rect x="291" y="471" width="1" height="13" fill="#ffffff"/><rect x="292" y="471" width="1" height="13" fill="#ffffff"/><rect x="293" y="473" width="1" height="11" fill="#ffffff"/><rect x="294" y="479" width="1" height="5" fill="#ffffff"/><rect x="295" y="479" width="1" height="5" fill="#ffffff"/><rect x="296" y="483" width="1" height="1" fill="#ff0000"/><rect x="297" y="473" width="1" height="11" fill="#ffffff"/><rect x="298" y="483" width="1" height="1" fill="#ff0000"/><rect x="299" y="483" width="1" height="1" fill="#ff0000"/><rect x="300" y="473" width="1" height="11" fill="#ffffff"/><rect x="301" y="473" width="1" height="11" fill="#ffffff"/><rect x="302" y="479" width="1" height="5" fill="#ffffff"/><rect x="303" y="483" width="1" height="1" fill="#ff0000"/><rect x="304" y="483" width="1" height="1" fill="#ff0000"/><rect x="305" y="483" width="1" height="1" fill="#ff0000"/><rect x="306" y="472" width="1" height="12" fill="#ffffff"/><rect x="307" y="470" width="1" height="14" fill="#ffffff"/><rect x="308" y="459" width="1" height="25" fill="#ffffff"/><rect x="309" y="451" width="1" height="33" fill="#ffffff"/><rect x="310" y="451" width="1" height="33" fill="#ffffff"/><rect x="311" y="451" width="1" height="33" fill="#ffffff"/><rect x="312" y="458" width="1" height="26" fill="#ffffff"/><rect x="313" y="458" width="1" height="26" fill="#ffffff"/><rect x="314" y="461" width="1" height="23" fill="#ffffff"/><rect x="315" y="461" width="1" height="23" fill="#ffffff"/><rect x="316" y="461" width="1" height="23" fill="#ffffff"/><rect x="317" y="469" width="1" height="15" fill="#ffffff"/><rect x="318" y="471" width="1" height="13" fill="#ffffff"/><rect x="319" y="471" width="1" height="13" fill="#ffffff"/><rect x="320" y="471" width="1" height="13" fill="#ffffff"/><rect x="321" y="473" width="1" height="11" fill="#ffffff"/><rect x="322" y="479" width="1" height="5" fill="#ffffff"/><rect x="323" y="479" width="1" height="5" fill="#ffffff"/><rect x="324" y="483" width="1" height="1" fill="#ff0000"/><rect x="325" y="473" width="1" height="11" fill="#ffffff"/><rect x="326" y="483" width="1" height="1" fill="#ff0000"/><rect x="327" y="483" width="1" height="1" fill="#ff0000"/><rect x="328" y="483" width="1" height="1" fill="#ff0000"/><rect x="329" y="473" width="1" height="11" fill="#ffffff"/><rect x="330" y="473" width="1" height="11" fill="#ffffff"/><rect x="331" y="479" width="1" height="5" fill="#ffffff"/><rect x="332" y="483" width="1" height="1" fill="#ff0000"/><rect x="333" y="483" width="1" height="1" fill="#ff0000"/><rect x="334" y="483" width="1" height="1" fill="#ff0000"/><rect x="335" y="472" width="1" height="12" fill="#ffffff"/><rect x="336" y="470" width="1" height="14" fill="#ffffff"/><rect x="337" y="459" width="1" height="25" fill="#ffffff"/><rect x="338" y="451" width="1" height="33" fill="#ffffff"/><rect x="339" y="451" width="1" height="33" fill="#ffffff"/><rect x="340" y="451" width="1" height="33" fill="#ffffff"/><rect x="341" y="458" width="1" height="26" fill="#ffffff"/><rect x="342" y="458" width="1" height="26" fill="#ffffff"/><rect x="343" y="461" width="1" height="23" fill="#ffffff"/><rect x="344" y="461" width="1" height="23" fill="#ffffff"/><rect x="345" y="461" width="1" height="23" fill="#ffffff"/><rect x="346" y="469" width="1" height="15" fill="#ffffff"/><rect x="347" y="471" width="1" height="13" fill="#ffffff"/><rect x="348" y="471" width="1" height="13" fill="#ffffff"/><rect x="349" y="471" width="1" height="13" fill="#ffffff"/><rect x="350" y="473" width="1" height="11" fill="#ffffff"/><rect x="351" y="479" width="1" height="5" fill="#ffffff"/><rect x="352" y="479" width="1" height="5" fill="#ffffff"/><rect x="353" y="483" width="1" height="1" fill="#ff0000"/><rect x="354" y="473" width="1" height="11" fill="#ffffff"/><rect x="355" y="483" width="1" height="1" fill="#ff0000"/><rect x="356" y="483" width="1" height="1" fill="#ff0000"/><rect x="357" y="473" width="1" height="11" fill="#ffffff"/><rect x="358" y="473" width="1" height="11" fill="#ffffff"/><rect x="359" y="479" width="1" height="5" fill="#ffffff"/><rect x="360" y="483" width="1" height="1" fill="#ff0000"/><rect x="361" y="483" width="1" height="1" fill="#ff0000"/><rect x="362" y="483" width="1" height="1" fill="#ff0000"/><rect x="363" y="472" width="1" height="12" fill="#ffffff"/><rect x="364" y="464" width="1" height="20" fill="#ffffff"/><rect x="365" y="451" width="1" height="33" fill="#ffffff"/><rect x="366" y="451" width="1" height="33" fill="#ffffff"/><rect x="367" y="451" width="1" height="33" fill="#ffffff"/><rect x="368" y="451" width="1" height="33" fill="#ffffff"/><rect x="369" y="461" width="1" height="23" fill="#ffffff"/><rect x="370" y="461" width="1" height="23" fill="#ffffff"/><rect x="371" y="462" width="1" height="22" fill="#ffffff"/><rect x="372" y="462" width="1" height="22" fill="#ffffff"/><rect x="373" y="456" width="1" height="28" fill="#ffffff"/><rect x="374" y="458" width="1" height="26" fill="#ffffff"/><rect x="375" y="458" width="1" height="26" fill="#ffffff"/><rect x="376" y="461" width="1" height="23" fill="#ffffff"/><rect x="377" y="461" width="1" height="23" fill="#ffffff"/><rect x="378" y="467" width="1" height="17" fill="#ffffff"/><rect x="379" y="467" width="1" height="17" fill="#ffffff"/><rect x="380" y="473" width="1" height="11" fill="#ffffff"/><rect x="381" y="473" width="1" height="11" fill="#ffffff"/><rect x="382" y="483" width="1" height="1" fill="#ff0000"/><rect x="383" y="473" width="1" height="11" fill="#ffffff"/><rect x="384" y="473" width="1" height="11" fill="#ffffff"/><rect x="385" y="483" width="1" height="1" fill="#ff0000"/><rect x="386" y="483" width="1" height="1" fill="#ff0000"/><rect x="387" y="473" width="1" height="11" fill="#ffffff"/><rect x="388" y="473" width="1" height="11" fill="#ffffff"/><rect x="389" y="483" width="1" height="1" fill="#ff0000"/><rect x="390" y="473" width="1" height="11" fill="#ffffff"/><rect x="391" y="471" width="1" height="13" fill="#ffffff"/><rect x="392" y="470" width="1" height="14" fill="#ffffff"/><rect x="393" y="459" width="1" height="25" fill="#ffffff"/><rect x="394" y="451" width="1" height="33" fill="#ffffff"/><rect x="395" y="451" width="1" height="33" fill="#ffffff"/><rect x="396" y="451" width="1" height="33" fill="#ffffff"/><rect x="397" y="458" width="1" height="26" fill="#ffffff"/><rect x="398" y="458" width="1" height="26" fill="#ffffff"/><rect x="399" y="461" width="1" height="23" fill="#ffffff"/><rect x="400" y="461" width="1" height="23" fill="#ffffff"/><rect x="401" y="461" width="1" height="23" fill="#ffffff"/><rect x="402" y="469" width="1" height="15" fill="#ffffff"/><rect x="403" y="471" width="1" height="13" fill="#ffffff"/><rect x="404" y="471" width="1" height="13" fill="#ffffff"/><rect x="405" y="471" width="1" height="13" fill="#ffffff"/><rect x="406" y="473" width="1" height="11" fill="#ffffff"/><rect x="407" y="479" width="1" height="5" fill="#ffffff"/><rect x="408" y="479" width="1" height="5" fill="#ffffff"/><rect x="409" y="483" width="1" height="1" fill="#ff0000"/><rect x="410" y="473" width="1" height="11" fill="#ffffff"/><rect x="411" y="483" width="1" height="1" fill="#ff0000"/><rect x="412" y="483" width="1" height="1" fill="#ff0000"/><rect x="413" y="473" width="1" height="11" fill="#ffffff"/><rect x="414" y="473" width="1" height="11" fill="#ffffff"/><rect x="415" y="479" width="1" height="5" fill="#ffffff"/><rect x="416" y="483" width="1" height="1" fill="#ff0000"/><rect x="417" y="483" width="1" height="1" fill="#ff0000"/><rect x="418" y="483" width="1" height="1" fill="#ff0000"/><rect x="419" y="472" width="1" height="12" fill="#ffffff"/><rect x="420" y="470" width="1" height="14" fill="#ffffff"/><rect x="421" y="459" width="1" height="25" fill="#ffffff"/><rect x="422" y="451" width="1" height="33" fill="#ffffff"/><rect x="423" y="451" width="1" height="33" fill="#ffffff"/><rect x="424" y="451" width="1" height="33" fill="#ffffff"/><rect x="425" y="458" width="1" height="26" fill="#ffffff"/><rect x="426" y="458" width="1" height="26" fill="#ffffff"/><rect x="427" y="461" width="1" height="23" fill="#ffffff"/><rect x="428" y="461" width="1" height="23" fill="#ffffff"/><rect x="429" y="461" width="1" height="23" fill="#ffffff"/><rect x="430" y="469" width="1" height="15" fill="#ffffff"/><rect x="431" y="471" width="1" height="13" fill="#ffffff"/><rect x="432" y="471" width="1" height="13" fill="#ffffff"/><rect x="433" y="471" width="1" height="13" fill="#ffffff"/><rect x="434" y="473" width="1" height="11" fill="#ffffff"/><rect x="435" y="479" width="1" height="5" fill="#ffffff"/><rect x="436" y="479" width="1" height="5" fill="#ffffff"/><rect x="437" y="483" width="1" height="1" fill="#ff0000"/><rect x="438" y="473" width="1" height="11" fill="#ffffff"/><rect x="439" y="483" width="1" height="1" fill="#ff0000"/><rect x="440" y="483" width="1" height="1" fill="#ff0000"/><rect x="441" y="473" width="1" height="11" fill="#ffffff"/><rect x="442" y="473" width="1" height="11" fill="#ffffff"/><rect x="443" y="479" width="1" height="5" fill="#ffffff"/><rect x="444" y="483" width="1" height="1" fill="#ff0000"/><rect x="445" y="483" width="1" height="1" fill="#ff0000"/><rect x="446" y="483" width="1" height="1" fill="#ff0000"/><rect x="447" y="472" width="1" height="12" fill="#ffffff"/><rect x="448" y="470" width="1" height="14" fill="#ffffff"/><rect x="449" y="459" width="1" height="25" fill="#ffffff"/><rect x="450" y="451" width="1" height="33" fill="#ffffff"/><rect x="451" y="451" width="1" height="33" fill="#ffffff"/><rect x="452" y="451" width="1" height="33" fill="#ffffff"/><rect x="453" y="458" width="1" height="26" fill="#ffffff"/><rect x="454" y="458" width="1" height="26" fill="#ffffff"/><rect x="455" y="461" width="1" height="23" fill="#ffffff"/><rect x="456" y="461" width="1" height="23" fill="#ffffff"/><rect x="457" y="461" width="1" height="23" fill="#ffffff"/><rect x="458" y="469" width="1" height="15" fill="#ffffff"/><rect x="459" y="471" width="1" height="13" fill="#ffffff"/><rect x="460" y="471" width="1" height="13" fill="#ffffff"/><rect x="461" y="471" width="1" height="13" fill="#ffffff"/><rect x="462" y="473" width="1" height="11" fill="#ffffff"/><rect x="463" y="479" width="1" height="5" fill="#ffffff"/><rect x="464" y="479" width="1" height="5" fill="#ffffff"/><rect x="465" y="483" width="1" height="1" fill="#ff0000"/><rect x="466" y="473" width="1" height="11" fill="#ffffff"/><rect x="467" y="483" width="1" height="1" fill="#ff0000"/><rect x="468" y="483" width="1" height="1" fill="#ff0000"/><rect x="469" y="473" width="1" height="11" fill="#ffffff"/><rect x="470" y="473" width="1" height="11" fill="#ffffff"/><rect x="471" y="479" width="1" height="5" fill="#ffffff"/><rect x="472" y="483" width="1" height="1" fill="#ff0000"/><rect x="473" y="483" width="1" height="1" fill="#ff0000"/><rect x="474" y="483" width="1" height="1" fill="#ff0000"/><rect x="475" y="472" width="1" height="12" fill="#ffffff"/><rect x="476" y="470" width="1" height="14" fill="#ffffff"/><rect x="477" y="459" width="1" height="25" fill="#ffffff"/><rect x="478" y="451" width="1" height="33" fill="#ffffff"/><rect x="479" y="451" width="1" height="33" fill="#ffffff"/><rect x="480" y="451" width="1" height="33" fill="#ffffff"/><rect x="481" y="458" width="1" height="26" fill="#ffffff"/><rect x="482" y="458" width="1" height="26" fill="#ffffff"/><rect x="483" y="461" width="1" height="23" fill="#ffffff"/><rect x="484" y="461" width="1" height="23" fill="#ffffff"/><rect x="485" y="461" width="1" height="23" fill="#ffffff"/><rect x="486" y="469" width="1" height="15" fill="#ffffff"/><rect x="487" y="471" width="1" height="13" fill="#ffffff"/><rect x="488" y="471" width="1" height="13" fill="#ffffff"/><rect x="489" y="471" width="1" height="13" fill="#ffffff"/><rect x="490" y="473" width="1" height="11" fill="#ffffff"/><rect x="491" y="479" width="1" height="5" fill="#ffffff"/><rect x="492" y="479" width="1" height="5" fill="#ffffff"/><rect x="493" y="483" width="1" height="1" fill="#ff0000"/><rect x="494" y="473" width="1" height="11" fill="#ffffff"/><rect x="495" y="483" width="1" height="1" fill="#ff0000"/><rect x="496" y="483" width="1" height="1" fill="#ff0000"/><rect x="497" y="483" width="1" height="1" fill="#ff0000"/><rect x="498" y="473" width="1" height="11" fill="#ffffff"/><rect x="499" y="473" width="1" height="11" fill="#ffffff"/><rect x="500" y="479" width="1" height="5" fill="#ffffff"/><rect x="501" y="483" width="1" height="1" fill="#ff0000"/><rect x="502" y="483" width="1" height="1" fill="#ff0000"/><rect x="503" y="483" width="1" height="1" fill="#ff0000"/><rect x="504" y="472" width="1" height="12" fill="#ffffff"/><rect x="505" y="470" width="1" height="14" fill="#ffffff"/><rect x="506" y="459" width="1" height="25" fill="#ffffff"/><rect x="507" y="451" width="1" height="33" fill="#ffffff"/><rect x="508" y="451" width="1" height="33" fill="#ffffff"/><rect x="509" y="451" width="1" height="33" fill="#ffffff"/><rect x="510" y="458" width="1" height="26" fill="#ffffff"/><rect x="511" y="458" width="1" height="26" fill="#ffffff"/><rect x="512" y="461" width="1" height="23" fill="#ffffff"/><rect x="513" y="461" width="1" height="23" fill="#ffffff"/><rect x="514" y="461" width="1" height="23" fill="#ffffff"/><rect x="515" y="469" width="1" height="15" fill="#ffffff"/><rect x="516" y="471" width="1" height="13" fill="#ffffff"/><rect x="517" y="471" width="1" height="13" fill="#ffffff"/><rect x="518" y="471" width="1" height="13" fill="#ffffff"/><rect x="519" y="473" width="1" height="11" fill="#ffffff"/><rect x="520" y="479" width="1" height="5" fill="#ffffff"/><rect x="521" y="479" width="1" height="5" fill="#ffffff"/><rect x="522" y="483" width="1" height="1" fill="#ff0000"/><rect x="523" y="473" width="1" height="11" fill="#ffffff"/><rect x="524" y="483" width="1" height="1" fill="#ff0000"/><rect x="525" y="483" width="1" height="1" fill="#ff0000"/><rect x="526" y="473" width="1" height="11" fill="#ffffff"/><rect x="527" y="473" width="1" height="11" fill="#ffffff"/><rect x="528" y="479" width="1" height="5" fill="#ffffff"/><rect x="529" y="483" width="1" height="1" fill="#ff0000"/><rect x="530" y="483" width="1" height="1" fill="#ff0000"/><rect x="531" y="483" width="1" height="1" fill="#ff0000"/><rect x="532" y="472" width="1" height="12" fill="#ffffff"/><rect x="533" y="470" width="1" height="14" fill="#ffffff"/><rect x="534" y="459" width="1" height="25" fill="#ffffff"/><rect x="535" y="451" width="1" height="33" fill="#ffffff"/><rect x="536" y="451" width="1" height="33" fill="#ffffff"/><rect x="537" y="451" width="1" height="33" fill="#ffffff"/><rect x="538" y="458" width="1" height="26" fill="#ffffff"/><rect x="539" y="458" width="1" height="26" fill="#ffffff"/><rect x="540" y="461" width="1" height="23" fill="#ffffff"/><rect x="541" y="461" width="1" height="23" fill="#ffffff"/><rect x="542" y="461" width="1" height="23" fill="#ffffff"/><rect x="543" y="469" width="1" height="15" fill="#ffffff"/><rect x="544" y="471" width="1" height="13" fill="#ffffff"/><rect x="545" y="471" width="1" height="13" fill="#ffffff"/><rect x="546" y="471" width="1" height="13" fill="#ffffff"/><rect x="547" y="473" width="1" height="11" fill="#ffffff"/><rect x="548" y="479" width="1" height="5" fill="#ffffff"/><rect x="549" y="479" width="1" height="5" fill="#ffffff"/><rect x="550" y="483" width="1" height="1" fill="#ff0000"/><rect x="551" y="473" width="1" height="11" fill="#ffffff"/><rect x="552" y="483" width="1" height="1" fill="#ff0000"/><rect x="553" y="483" width="1" height="1" fill="#ff0000"/><rect x="554" y="473" width="1" height="11" fill="#ffffff"/><rect x="555" y="473" width="1" height="11" fill="#ffffff"/><rect x="556" y="479" width="1" height="5" fill="#ffffff"/><rect x="557" y="483" width="1" height="1" fill="#ff0000"/><rect x="558" y="483" width="1" height="1" fill="#ff0000"/><rect x="559" y="483" width="1" height="1" fill="#ff0000"/><rect x="560" y="472" width="1" height="12" fill="#ffffff"/><rect x="561" y="470" width="1" height="14" fill="#ffffff"/><rect x="562" y="459" width="1" height="25" fill="#ffffff"/><rect x="563" y="451" width="1" height="33" fill="#ffffff"/><rect x="564" y="451" width="1" height="33" fill="#ffffff"/><rect x="565" y="451" width="1" height="33" fill="#ffffff"/><rect x="566" y="458" width="1" height="26" fill="#ffffff"/><rect x="567" y="458" width="1" height="26" fill="#ffffff"/><rect x="568" y="461" width="1" height="23" fill="#ffffff"/><rect x="569" y="461" width="1" height="23" fill="#ffffff"/><rect x="570" y="461" width="1" height="23" fill="#ffffff"/><rect x="571" y="469" width="1" height="15" fill="#ffffff"/><rect x="572" y="471" width="1" height="13" fill="#ffffff"/><rect x="573" y="471" width="1" height="13" fill="#ffffff"/><rect x="574" y="471" width="1" height="13" fill="#ffffff"/><rect x="575" y="473" width="1" height="11" fill="#ffffff"/><rect x="576" y="479" width="1" height="5" fill="#ffffff"/><rect x="577" y="479" width="1" height="5" fill="#ffffff"/><rect x="578" y="483" width="1" height="1" fill="#ff0000"/><rect x="579" y="473" width="1" height="11" fill="#ffffff"/><rect x="580" y="483" width="1" height="1" fill="#ff0000"/><rect x="581" y="483" width="1" height="1" fill="#ff0000"/><rect x="582" y="473" width="1" height="11" fill="#ffffff"/><rect x="583" y="473" width="1" height="11" fill="#ffffff"/><rect x="584" y="479" width="1" height="5" fill="#ffffff"/><rect x="585" y="483" width="1" height="1" fill="#ff0000"/><rect x="586" y="483" width="1" height="1" fill="#ff0000"/><rect x="587" y="483" width="1" height="1" fill="#ff0000"/><rect x="588" y="472" width="1" height="12" fill="#ffffff"/><rect x="589" y="472" width="1" height="12" fill="#ffffff"/><rect x="590" y="461" width="1" height="23" fill="#ffffff"/><rect x="591" y="451" width="1" height="33" fill="#ffffff"/><rect x="592" y="452" width="1" height="32" fill="#ffffff"/><rect x="593" y="451" width="1" height="33" fill="#ffffff"/><rect x="594" y="455" width="1" height="29" fill="#ffffff"/><rect x="595" y="459" width="1" height="25" fill="#ffffff"/><rect x="596" y="461" width="1" height="23" fill="#ffffff"/><rect x="597" y="461" width="1" height="23" fill="#ffffff"/><rect x="598" y="458" width="1" height="26" fill="#ffffff"/><rect x="599" y="456" width="1" height="28" fill="#ffffff"/><rect x="600" y="459" width="1" height="25" fill="#ffffff"/><rect x="601" y="460" width="1" height="24" fill="#ffffff"/><rect x="602" y="461" width="1" height="23" fill="#ffffff"/><rect x="603" y="460" width="1" height="24" fill="#ffffff"/><rect x="604" y="469" width="1" height="15" fill="#ffffff"/><rect x="605" y="472" width="1" height="12" fill="#ffffff"/><rect x="606" y="472" width="1" height="12" fill="#ffffff"/><rect x="607" y="480" width="1" height="4" fill="#ffffff"/><rect x="608" y="480" width="1" height="4" fill="#ffffff"/><rect x="609" y="483" width="1" height="1" fill="#ff0000"/><rect x="610" y="483" width="1" height="1" fill="#ff0000"/><rect x="611" y="472" width="1" height="12" fill="#ffffff"/><rect x="612" y="474" width="1" height="10" fill="#ffffff"/><rect x="613" y="483" width="1" height="1" fill="#ff0000"/><rect x="614" y="483" width="1" height="1" fill="#ff0000"/><rect x="615" y="483" width="1" height="1" fill="#ff0000"/><rect x="616" y="483" width="1" height="1" fill="#ff0000"/><rect x="617" y="483" width="1" height="1" fill="#ff0000"/><rect x="618" y="483" width="1" height="1" fill="#ff0000"/><rect x="619" y="483" width="1" height="1" fill="#ff0000"/><rect x="620" y="483" width="1" height="1" fill="#ff0000"/><rect x="621" y="483" width="1" height="1" fill="#ff0000"/><rect x="622" y="483" width="1" height="1" fill="#ff0000"/><rect x="623" y="483" width="1" height="1" fill="#ff0000"/><rect x="624" y="483" width="1" height="1" fill="#ff0000"/><rect x="625" y="483" width="1" height="1" fill="#ff0000"/><rect x="626" y="483" width="1" height="1" fill="#ff0000"/><rect x="627" y="483" width="1" height="1" fill="#ff0000"/><rect x="628" y="483" width="1" height="1" fill="#ff0000"/><rect x="629" y="483" width="1" height="1" fill="#ff0000"/><rect x="630" y="483" width="1" height="1" fill="#ff0000"/><rect x="631" y="483" width="1" height="1" fill="#ff0000"/><rect x="632" y="483" width="1" height="1" fill="#ff0000"/><rect x="633" y="483" width="1" height="1" fill="#ff0000"/><rect x="634" y="483" width="1" height="1" fill="#ff0000"/><rect x="635" y="483" width="1" height="1" fill="#ff0000"/><rect x="636" y="483" width="1" height="1" fill="#ff0000"/><rect x="637" y="483" width="1" height="1" fill="#ff0000"/><rect x="638" y="483" width="1" height="1" fill="#ff0000"/><rect x="639" y="483" width="1" height="1" fill="#ff0000"/><rect x="640" y="483" width="1" height="1" fill="#ff0000"/><rect x="641" y="483" width="1" height="1" fill="#ff0000"/><rect x="642" y="483" width="1" height="1" fill="#ff0000"/><rect x="643" y="483" width="1" height="1" fill="#ff0000"/><rect x="644" y="483" width="1" height="1" fill="#ff0000"/><rect x="645" y="483" width="1" height="1" fill="#ff0000"/><rect x="646" y="483" width="1" height="1" fill="#ff0000"/><rect x="647" y="483" width="1" height="1" fill="#ff0000"/><rect x="648" y="483" width="1" height="1" fill="#ff0000"/><rect x="649" y="483" width="1" height="1" fill="#ff0000"/><rect x="650" y="483" width="1" height="1" fill="#ff0000"/><rect x="651" y="483" width="1" height="1" fill="#ff0000"/><rect x="652" y="483" width="1" height="1" fill="#ff0000"/><rect x="653" y="483" width="1" height="1" fill="#ff0000"/><rect x="654" y="483" width="1" height="1" fill="#ff0000"/><rect x="655" y="483" width="1" height="1" fill="#ff0000"/><rect x="656" y="483" width="1" height="1" fill="#ff0000"/><rect x="657" y="483" width="1" height="1" fill="#ff0000"/><rect x="658" y="483" width="1" height="1" fill="#ff0000"/><rect x="659" y="483" width="1" height="1" fill="#ff0000"/><rect x="660" y="483" width="1" height="1" fill="#ff0000"/><rect x="661" y="483" width="1" height="1" fill="#ff0000"/><rect x="662" y="483" width="1" height="1" fill="#ff0000"/><rect x="663" y="483" width="1" height="1" fill="#ff0000"/><rect x="664" y="483" width="1" height="1" fill="#ff0000"/><rect x="665" y="483" width="1" height="1" fill="#ff0000"/><rect x="666" y="483" width="1" height="1" fill="#ff0000"/><rect x="667" y="483" width="1" height="1" fill="#ff0000"/><rect x="668" y="483" width="1" height="1" fill="#ff0000"/><rect x="669" y="483" width="1" height="1" fill="#ff0000"/><rect x="670" y="483" width="1" height="1" fill="#ff0000"/><path d="M127.72 8.06 L127.72 7.72 L128.10 7.04 L128.48 6.70 L129.25 6.36 L130.79 6.36 L131.56 6.70 L131.95 7.04 L132.34 7.72 L132.34 8.40 L131.95 9.08 L131.18 10.10 L127.33 13.50 L132.72 13.50M137.34 6.36 L136.19 6.70 L135.41 7.72 L135.03 9.42 L135.03 10.44 L135.41 12.14 L136.19 13.16 L137.34 13.50 L138.11 13.50 L139.26 13.16 L140.03 12.14 L140.42 10.44 L140.42 9.42 L140.03 7.72 L139.26 6.70 L138.11 6.36 L137.34 6.36M143.50 8.74 L143.12 9.08 L143.50 9.42 L143.88 9.08 L143.50 8.74M143.50 12.82 L143.12 13.16 L143.50 13.50 L143.88 13.16 L143.50 12.82M148.89 6.36 L147.74 6.70 L146.97 7.72 L146.58 9.42 L146.58 10.44 L146.97 12.14 L147.74 13.16 L148.89 13.50 L149.66 13.50 L150.81 13.16 L151.59 12.14 L151.97 10.44 L151.97 9.42 L151.59 7.72 L150.81 6.70 L149.66 6.36 L148.89 6.36M156.59 6.36 L155.44 6.70 L154.66 7.72 L154.28 9.42 L154.28 10.44 L154.66 12.14 L155.44 13.16 L156.59 13.50 L157.36 13.50 L158.51 13.16 L159.28 12.14 L159.67 10.44 L159.67 9.42 L159.28 7.72 L158.51 6.70 L157.36 6.36 L156.59 6.36" stroke="#ffffff" stroke-width="1" fill="none"/><path d="M127.72 496.06 L127.72 495.72 L128.10 495.04 L128.48 494.70 L129.25 494.36 L130.79 494.36 L131.56 494.70 L131.95 495.04 L132.34 495.72 L132.34 496.40 L131.95 497.08 L131.18 498.10 L127.33 501.50 L132.72 501.50M137.34 494.36 L136.19 494.70 L135.41 495.72 L135.03 497.42 L135.03 498.44 L135.41 500.14 L136.19 501.16 L137.34 501.50 L138.11 501.50 L139.26 501.16 L140.03 500.14 L140.42 498.44 L140.42 497.42 L140.03 495.72 L139.26 494.70 L138.11 494.36 L137.34 494.36M143.50 496.74 L143.12 497.08 L143.50 497.42 L143.88 497.08 L143.50 496.74M143.50 500.82 L143.12 501.16 L143.50 501.50 L143.88 501.16 L143.50 500.82M148.89 494.36 L147.74 494.70 L146.97 495.72 L146.58 497.42 L146.58 498.44 L146.97 500.14 L147.74 501.16 L148.89 501.50 L149.66 501.50 L150.81 501.16 L151.59 500.14 L151.97 498.44 L151.97 497.42 L151.59 495.72 L150.81 494.70 L149.66 494.36 L148.89 494.36M156.59 494.36 L155.44 494.70 L154.66 495.72 L154.28 497.42 L154.28 498.44 L154.66 500.14 L155.44 501.16 L156.59 501.50 L157.36 501.50 L158.51 501.16 L159.28 500.14 L159.67 498.44 L159.67 497.42 L159.28 495.72 L158.51 494.70 L157.36 494.36 L156.59 494.36" stroke="#ffffff" stroke-width="1" fill="none"/><path d="M222.49 7.72 L223.26 7.38 L224.41 6.36 L224.41 13.50M234.04 7.38 L233.65 6.70 L232.50 6.36 L231.73 6.36 L230.57 6.70 L229.80 7.72 L229.42 9.42 L229.42 11.12 L229.80 12.48 L230.57 13.16 L231.73 13.50 L232.11 13.50 L233.27 13.16 L234.04 12.48 L234.42 11.46 L234.42 11.12 L234.04 10.10 L233.27 9.42 L232.11 9.08 L231.73 9.08 L230.57 9.42 L229.80 10.10 L229.42 11.12M237.50 8.74 L237.12 9.08 L237.50 9.42 L237.89 9.08 L237.50 8.74M237.50 12.82 L237.12 13.16 L237.50 13.50 L237.89 13.16 L237.50 12.82M242.89 6.36 L241.74 6.70 L240.97 7.72 L240.58 9.42 L240.58 10.44 L240.97 12.14 L241.74 13.16 L242.89 13.50 L243.66 13.50 L244.81 13.16 L245.59 12.14 L245.97 10.44 L245.97 9.42 L245.59 7.72 L244.81 6.70 L243.66 6.36 L242.89 6.36M250.59 6.36 L249.44 6.70 L248.67 7.72 L248.28 9.42 L248.28 10.44 L248.67 12.14 L249.44 13.16 L250.59 13.50 L251.36 13.50 L252.52 13.16 L253.29 12.14 L253.67 10.44 L253.67 9.42 L253.29 7.72 L252.52 6.70 L251.36 6.36 L250.59 6.36" stroke="#ffffff" stroke-width="1" fill="none"/><path d="M222.49 495.72 L223.26 495.38 L224.41 494.36 L224.41 501.50M234.04 495.38 L233.65 494.70 L232.50 494.36 L231.73 494.36 L230.57 494.70 L229.80 495.72 L229.42 497.42 L229.42 499.12 L229.80 500.48 L230.57 501.16 L231.73 501.50 L232.11 501.50 L233.27 501.16 L234.04 500.48 L234.42 499.46 L234.42 499.12 L234.04 498.10 L233.27 497.42 L232.11 497.08 L231.73 497.08 L230.57 497.42 L229.80 498.10 L229.42 499.12M237.50 496.74 L237.12 497.08 L237.50 497.42 L237.89 497.08 L237.50 496.74M237.50 500.82 L237.12 501.16 L237.50 501.50 L237.89 501.16 L237.50 500.82M242.89 494.36 L241.74 494.70 L240.97 495.72 L240.58 497.42 L240.58 498.44 L240.97 500.14 L241.74 501.16 L242.89 501.50 L243.66 501.50 L244.81 501.16 L245.59 500.14 L245.97 498.44 L245.97 497.42 L245.59 495.72 L244.81 494.70 L243.66 494.36 L242.89 494.36M250.59 494.36 L249.44 494.70 L248.67 495.72 L248.28 497.42 L248.28 498.44 L248.67 500.14 L249.44 501.16 L250.59 501.50 L251.36 501.50 L252.52 501.16 L253.29 500.14 L253.67 498.44 L253.67 497.42 L253.29 495.72 L252.52 494.70 L251.36 494.36 L250.59 494.36" stroke="#ffffff" stroke-width="1" fill="none"/><path d="M316.49 7.72 L317.25 7.38 L318.41 6.36 L318.41 13.50M323.42 8.06 L323.42 7.72 L323.80 7.04 L324.19 6.70 L324.96 6.36 L326.50 6.36 L327.26 6.70 L327.65 7.04 L328.04 7.72 L328.04 8.40 L327.65 9.08 L326.88 10.10 L323.03 13.50 L328.42 13.50M331.50 8.74 L331.12 9.08 L331.50 9.42 L331.88 9.08 L331.50 8.74M331.50 12.82 L331.12 13.16 L331.50 13.50 L331.88 13.16 L331.50 12.82M336.89 6.36 L335.74 6.70 L334.97 7.72 L334.58 9.42 L334.58 10.44 L334.97 12.14 L335.74 13.16 L336.89 13.50 L337.66 13.50 L338.81 13.16 L339.59 12.14 L339.97 10.44 L339.97 9.42 L339.59 7.72 L338.81 6.70 L337.66 6.36 L336.89 6.36M344.59 6.36 L343.44 6.70 L342.67 7.72 L342.28 9.42 L342.28 10.44 L342.67 12.14 L343.44 13.16 L344.59 13.50 L345.36 13.50 L346.51 13.16 L347.29 12.14 L347.67 10.44 L347.67 9.42 L347.29 7.72 L346.51 6.70 L345.36 6.36 L344.59 6.36" stroke="#ffffff" stroke-width="1" fill="none"/><path d="M316.49 495.72 L317.25 495.38 L318.41 494.36 L318.41 501.50M323.42 496.06 L323.42 495.72 L323.80 495.04 L324.19 494.70 L324.96 494.36 L326.50 494.36 L327.26 494.70 L327.65 495.04 L328.04 495.72 L328.04 496.40 L327.65 497.08 L326.88 498.10 L323.03 501.50 L328.42 501.50M331.50 496.74 L331.12 497.08 L331.50 497.42 L331.88 497.08 L331.50 496.74M331.50 500.82 L331.12 501.16 L331.50 501.50 L331.88 501.16 L331.50 500.82M336.89 494.36 L335.74 494.70 L334.97 495.72 L334.58 497.42 L334.58 498.44 L334.97 500.14 L335.74 501.16 L336.89 501.50 L337.66 501.50 L338.81 501.16 L339.59 500.14 L339.97 498.44 L339.97 497.42 L339.59 495.72 L338.81 494.70 L337.66 494.36 L336.89 494.36M344.59 494.36 L343.44 494.70 L342.67 495.72 L342.28 497.42 L342.28 498.44 L342.67 500.14 L343.44 501.16 L344.59 501.50 L345.36 501.50 L346.51 501.16 L347.29 500.14 L347.67 498.44 L347.67 497.42 L347.29 495.72 L346.51 494.70 L345.36 494.36 L344.59 494.36" stroke="#ffffff" stroke-width="1" fill="none"/><path d="M411.64 6.36 L410.49 6.70 L409.72 7.72 L409.33 9.42 L409.33 10.44 L409.72 12.14 L410.49 13.16 L411.64 13.50 L412.41 13.50 L413.56 13.16 L414.34 12.14 L414.72 10.44 L414.72 9.42 L414.34 7.72 L413.56 6.70 L412.41 6.36 L411.64 6.36M418.96 6.36 L417.80 6.70 L417.42 7.38 L417.42 8.06 L417.80 8.74 L418.57 9.08 L420.11 9.42 L421.26 9.76 L422.04 10.44 L422.42 11.12 L422.42 12.14 L422.04 12.82 L421.65 13.16 L420.50 13.50 L418.96 13.50 L417.80 13.16 L417.42 12.82 L417.03 12.14 L417.03 11.12 L417.42 10.44 L418.19 9.76 L419.34 9.42 L420.88 9.08 L421.65 8.74 L422.04 8.06 L422.04 7.38 L421.65 6.70 L420.50 6.36 L418.96 6.36M425.50 8.74 L425.12 9.08 L425.50 9.42 L425.88 9.08 L425.50 8.74M425.50 12.82 L425.12 13.16 L425.50 13.50 L425.88 13.16 L425.50 12.82M430.89 6.36 L429.74 6.70 L428.97 7.72 L428.58 9.42 L428.58 10.44 L428.97 12.14 L429.74 13.16 L430.89 13.50 L431.66 13.50 L432.81 13.16 L433.59 12.14 L433.97 10.44 L433.97 9.42 L433.59 7.72 L432.81 6.70 L431.66 6.36 L430.89 6.36M438.59 6.36 L437.44 6.70 L436.67 7.72 L436.28 9.42 L436.28 10.44 L436.67 12.14 L437.44 13.16 L438.59 13.50 L439.36 13.50 L440.51 13.16 L441.29 12.14 L441.67 10.44 L441.67 9.42 L441.29 7.72 L440.51 6.70 L439.36 6.36 L438.59 6.36" stroke="#ffffff" stroke-width="1" fill="none"/><path d="M411.64 494.36 L410.49 494.70 L409.72 495.72 L409.33 497.42 L409.33 498.44 L409.72 500.14 L410.49 501.16 L411.64 501.50 L412.41 501.50 L413.56 501.16 L414.34 500.14 L414.72 498.44 L414.72 497.42 L414.34 495.72 L413.56 494.70 L412.41 494.36 L411.64 494.36M418.96 494.36 L417.80 494.70 L417.42 495.38 L417.42 496.06 L417.80 496.74 L418.57 497.08 L420.11 497.42 L421.26 497.76 L422.04 498.44 L422.42 499.12 L422.42 500.14 L422.04 500.82 L421.65 501.16 L420.50 501.50 L418.96 501.50 L417.80 501.16 L417.42 500.82 L417.03 500.14 L417.03 499.12 L417.42 498.44 L418.19 497.76 L419.34 497.42 L420.88 497.08 L421.65 496.74 L422.04 496.06 L422.04 495.38 L421.65 494.70 L420.50 494.36 L418.96 494.36M425.50 496.74 L425.12 497.08 L425.50 497.42 L425.88 497.08 L425.50 496.74M425.50 500.82 L425.12 501.16 L425.50 501.50 L425.88 501.16 L425.50 500.82M430.89 494.36 L429.74 494.70 L428.97 495.72 L428.58 497.42 L428.58 498.44 L428.97 500.14 L429.74 501.16 L430.89 501.50 L431.66 501.50 L432.81 501.16 L433.59 500.14 L433.97 498.44 L433.97 497.42 L433.59 495.72 L432.81 494.70 L431.66 494.36 L430.89 494.36M438.59 494.36 L437.44 494.70 L436.67 495.72 L436.28 497.42 L436.28 498.44 L436.67 500.14 L437.44 501.16 L438.59 501.50 L439.36 501.50 L440.51 501.16 L441.29 500.14 L441.67 498.44 L441.67 497.42 L441.29 495.72 L440.51 494.70 L439.36 494.36 L438.59 494.36" stroke="#ffffff" stroke-width="1" fill="none"/><path d="M505.64 6.36 L504.49 6.70 L503.72 7.72 L503.33 9.42 L503.33 10.44 L503.72 12.14 L504.49 13.16 L505.64 13.50 L506.41 13.50 L507.56 13.16 L508.34 12.14 L508.72 10.44 L508.72 9.42 L508.34 7.72 L507.56 6.70 L506.41 6.36 L505.64 6.36M514.88 6.36 L511.03 11.12 L516.81 11.12M514.88 6.36 L514.88 13.50M519.50 8.74 L519.12 9.08 L519.50 9.42 L519.88 9.08 L519.50 8.74M519.50 12.82 L519.12 13.16 L519.50 13.50 L519.88 13.16 L519.50 12.82M524.89 6.36 L523.74 6.70 L522.97 7.72 L522.58 9.42 L522.58 10.44 L522.97 12.14 L523.74 13.16 L524.89 13.50 L525.66 13.50 L526.82 13.16 L527.59 12.14 L527.97 10.44 L527.97 9.42 L527.59 7.72 L526.82 6.70 L525.66 6.36 L524.89 6.36M532.59 6.36 L531.44 6.70 L530.66 7.72 L530.28 9.42 L530.28 10.44 L530.66 12.14 L531.44 13.16 L532.59 13.50 L533.36 13.50 L534.51 13.16 L535.28 12.14 L535.67 10.44 L535.67 9.42 L535.28 7.72 L534.51 6.70 L533.36 6.36 L532.59 6.36" stroke="#ffffff" stroke-width="1" fill="none"/><path d="M505.64 494.36 L504.49 494.70 L503.72 495.72 L503.33 497.42 L503.33 498.44 L503.72 500.14 L504.49 501.16 L505.64 501.50 L506.41 501.50 L507.56 501.16 L508.34 500.14 L508.72 498.44 L508.72 497.42 L508.34 495.72 L507.56 494.70 L506.41 494.36 L505.64 494.36M514.88 494.36 L511.03 499.12 L516.81 499.12M514.88 494.36 L514.88 501.50M519.50 496.74 L519.12 497.08 L519.50 497.42 L519.88 497.08 L519.50 496.74M519.50 500.82 L519.12 501.16 L519.50 501.50 L519.88 501.16 L519.50 500.82M524.89 494.36 L523.74 494.70 L522.97 495.72 L522.58 497.42 L522.58 498.44 L522.97 500.14 L523.74 501.16 L524.89 501.50 L525.66 501.50 L526.82 501.16 L527.59 500.14 L527.97 498.44 L527.97 497.42 L527.59 495.72 L526.82 494.70 L525.66 494.36 L524.89 494.36M532.59 494.36 L531.44 494.70 L530.66 495.72 L530.28 497.42 L530.28 498.44 L530.66 500.14 L531.44 501.16 L532.59 501.50 L533.36 501.50 L534.51 501.16 L535.28 500.14 L535.67 498.44 L535.67 497.42 L535.28 495.72 L534.51 494.70 L533.36 494.36 L532.59 494.36" stroke="#ffffff" stroke-width="1" fill="none"/><path d="M599.64 6.36 L598.48 6.70 L597.71 7.72 L597.33 9.42 L597.33 10.44 L597.71 12.14 L598.48 13.16 L599.64 13.50 L600.41 13.50 L601.56 13.16 L602.33 12.14 L602.72 10.44 L602.72 9.42 L602.33 7.72 L601.56 6.70 L600.41 6.36 L599.64 6.36M607.34 6.36 L606.18 6.70 L605.41 7.72 L605.03 9.42 L605.03 10.44 L605.41 12.14 L606.18 13.16 L607.34 13.50 L608.11 13.50 L609.26 13.16 L610.03 12.14 L610.42 10.44 L610.42 9.42 L610.03 7.72 L609.26 6.70 L608.11 6.36 L607.34 6.36M613.50 8.74 L613.12 9.08 L613.50 9.42 L613.88 9.08 L613.50 8.74M613.50 12.82 L613.12 13.16 L613.50 13.50 L613.88 13.16 L613.50 12.82M618.89 6.36 L617.73 6.70 L616.96 7.72 L616.58 9.42 L616.58 10.44 L616.96 12.14 L617.73 13.16 L618.89 13.50 L619.66 13.50 L620.81 13.16 L621.58 12.14 L621.97 10.44 L621.97 9.42 L621.58 7.72 L620.81 6.70 L619.66 6.36 L618.89 6.36M626.59 6.36 L625.43 6.70 L624.66 7.72 L624.28 9.42 L624.28 10.44 L624.66 12.14 L625.43 13.16 L626.59 13.50 L627.36 13.50 L628.51 13.16 L629.28 12.14 L629.67 10.44 L629.67 9.42 L629.28 7.72 L628.51 6.70 L627.36 6.36 L626.59 6.36" stroke="#ffffff" stroke-width="1" fill="none"/><path d="M599.64 494.36 L598.48 494.70 L597.71 495.72 L597.33 497.42 L597.33 498.44 L597.71 500.14 L598.48 501.16 L599.64 501.50 L600.41 501.50 L601.56 501.16 L602.33 500.14 L602.72 498.44 L602.72 497.42 L602.33 495.72 L601.56 494.70 L600.41 494.36 L599.64 494.36M607.34 494.36 L606.18 494.70 L605.41 495.72 L605.03 497.42 L605.03 498.44 L605.41 500.14 L606.18 501.16 L607.34 501.50 L608.11 501.50 L609.26 501.16 L610.03 500.14 L610.42 498.44 L610.42 497.42 L610.03 495.72 L609.26 494.70 L608.11 494.36 L607.34 494.36M613.50 496.74 L613.12 497.08 L613.50 497.42 L613.88 497.08 L613.50 496.74M613.50 500.82 L613.12 501.16 L613.50 501.50 L613.88 501.16 L613.50 500.82M618.89 494.36 L617.73 494.70 L616.96 495.72 L616.58 497.42 L616.58 498.44 L616.96 500.14 L617.73 501.16 L618.89 501.50 L619.66 501.50 L620.81 501.16 L621.58 500.14 L621.97 498.44 L621.97 497.42 L621.58 495.72 L620.81 494.70 L619.66 494.36 L618.89 494.36M626.59 494.36 L625.43 494.70 L624.66 495.72 L624.28 497.42 L624.28 498.44 L624.66 500.14 L625.43 501.16 L626.59 501.50 L627.36 501.50 L628.51 501.16 L629.28 500.14 L629.67 498.44 L629.67 497.42 L629.28 495.72 L628.51 494.70 L627.36 494.36 L626.59 494.36" stroke="#ffffff" stroke-width="1" fill="none"/><path d="M21.16 53.52 L21.16 61.50M18.50 53.52 L23.82 53.52M25.72 53.52 L25.72 61.50M25.72 53.52 L28.76 61.50M31.80 53.52 L28.76 61.50M31.80 53.52 L31.80 61.50M45.86 54.66 L45.10 53.90 L43.96 53.52 L42.44 53.52 L41.30 53.90 L40.54 54.66 L40.54 55.42 L40.92 56.18 L41.30 56.56 L42.06 56.94 L44.34 57.70 L45.10 58.08 L45.48 58.46 L45.86 59.22 L45.86 60.36 L45.10 61.12 L43.96 61.50 L42.44 61.50 L41.30 61.12 L40.54 60.36M48.52 53.52 L48.52 59.22 L48.90 60.36 L49.66 61.12 L50.80 61.50 L51.56 61.50 L52.70 61.12 L53.46 60.36 L53.84 59.22 L53.84 53.52M56.88 53.52 L56.88 61.50M56.88 53.52 L60.30 53.52 L61.44 53.90 L61.82 54.28 L62.20 55.04 L62.20 55.80 L61.82 56.56 L61.44 56.94 L60.30 57.32M56.88 57.32 L60.30 57.32 L61.44 57.70 L61.82 58.08 L62.20 58.84 L62.20 59.98 L61.82 60.74 L61.44 61.12 L60.30 61.50 L56.88 61.50M64.86 53.52 L64.86 61.50M64.86 53.52 L67.90 61.50M70.94 53.52 L67.90 61.50M70.94 53.52 L70.94 61.50M75.88 53.52 L75.12 53.90 L74.36 54.66 L73.98 55.42 L73.60 56.56 L73.60 58.46 L73.98 59.60 L74.36 60.36 L75.12 61.12 L75.88 61.50 L77.40 61.50 L78.16 61.12 L78.92 60.36 L79.30 59.60 L79.68 58.46 L79.68 56.56 L79.30 55.42 L78.92 54.66 L78.16 53.90 L77.40 53.52 L75.88 53.52M82.34 53.52 L82.34 61.50M82.34 53.52 L85.00 53.52 L86.14 53.90 L86.90 54.66 L87.28 55.42 L87.66 56.56 L87.66 58.46 L87.28 59.60 L86.90 60.36 L86.14 61.12 L85.00 61.50 L82.34 61.50M90.32 53.52 L90.32 61.50M90.32 53.52 L95.26 53.52M90.32 57.32 L93.36 57.32M90.32 61.50 L95.26 61.50" stroke="#ffffff" stroke-width="1" fill="none"/><path d="M105.73 30.52 L101.88 30.52 L101.49 33.94 L101.88 33.56 L103.03 33.18 L104.19 33.18 L105.34 33.56 L106.11 34.32 L106.50 35.46 L106.50 36.22 L106.11 37.36 L105.34 38.12 L104.19 38.50 L103.03 38.50 L101.88 38.12 L101.49 37.74 L101.11 36.98" stroke="#ffffff" stroke-width="1" fill="none"/><path d="M104.95 39.52 L101.11 44.84 L106.88 44.84M104.95 39.52 L104.95 47.50" stroke="#ffffff" stroke-width="1" fill="none"/><path d="M101.88 48.52 L106.11 48.52 L103.80 51.56 L104.95 51.56 L105.73 51.94 L106.11 52.32 L106.50 53.46 L106.50 54.22 L106.11 55.36 L105.34 56.12 L104.19 56.50 L103.03 56.50 L101.88 56.12 L101.49 55.74 L101.11 54.98" stroke="#ffffff" stroke-width="1" fill="none"/><path d="M101.49 60.42 L101.49 60.04 L101.88 59.28 L102.26 58.90 L103.03 58.52 L104.57 58.52 L105.34 58.90 L105.73 59.28 L106.11 60.04 L106.11 60.80 L105.73 61.56 L104.95 62.70 L101.11 66.50 L106.50 66.50" stroke="#ffffff" stroke-width="1" fill="none"/><path d="M102.26 69.04 L103.03 68.66 L104.19 67.52 L104.19 75.50" stroke="#ffffff" stroke-width="1" fill="none"/><path d="M8.10 100.52 L8.10 108.50M8.10 108.50 L12.71 108.50M16.55 100.52 L13.48 108.50M16.55 100.52 L19.62 108.50M14.63 105.84 L18.47 105.84M26.53 101.66 L25.76 100.90 L24.61 100.52 L23.08 100.52 L21.92 100.90 L21.16 101.66 L21.16 102.42 L21.54 103.18 L21.92 103.56 L22.69 103.94 L25.00 104.70 L25.76 105.08 L26.15 105.46 L26.53 106.22 L26.53 107.36 L25.76 108.12 L24.61 108.50 L23.08 108.50 L21.92 108.12 L21.16 107.36M34.60 102.42 L34.21 101.66 L33.44 100.90 L32.68 100.52 L31.14 100.52 L30.37 100.90 L29.60 101.66 L29.22 102.42 L28.84 103.56 L28.84 105.46 L29.22 106.60 L29.60 107.36 L30.37 108.12 L31.14 108.50 L32.68 108.50 L33.44 108.12 L34.21 107.36 L34.60 106.60M39.20 100.52 L38.44 100.90 L37.67 101.66 L37.28 102.42 L36.90 103.56 L36.90 105.46 L37.28 106.60 L37.67 107.36 L38.44 108.12 L39.20 108.50 L40.74 108.50 L41.51 108.12 L42.28 107.36 L42.66 106.60 L43.04 105.46 L43.04 103.56 L42.66 102.42 L42.28 101.66 L41.51 100.90 L40.74 100.52 L39.20 100.52M51.88 99.00 L44.96 111.16M54.18 100.52 L54.18 108.50M54.18 100.52 L59.17 100.52M54.18 104.32 L57.25 104.32M54.18 108.50 L59.17 108.50M61.48 100.52 L61.48 108.50M66.08 100.52 L66.08 108.50M63.40 100.52 L68.77 100.52M79.52 99.00 L78.76 99.76 L77.99 100.90 L77.22 102.42 L76.84 104.32 L76.84 105.84 L77.22 107.74 L77.99 109.26 L78.76 110.40 L79.52 111.16M82.21 100.52 L82.21 108.50M82.21 100.52 L84.90 100.52 L86.05 100.90 L86.82 101.66 L87.20 102.42 L87.59 103.56 L87.59 105.46 L87.20 106.60 L86.82 107.36 L86.05 108.12 L84.90 108.50 L82.21 108.50M90.28 100.52 L90.28 108.50M90.28 100.52 L93.73 100.52 L94.88 100.90 L95.27 101.28 L95.65 102.04 L95.65 103.18 L95.27 103.94 L94.88 104.32 L93.73 104.70 L90.28 104.70M97.96 99.00 L98.72 99.76 L99.49 100.90 L100.26 102.42 L100.64 104.32 L100.64 105.84 L100.26 107.74 L99.49 109.26 L98.72 110.40 L97.96 111.16" stroke="#ffffff" stroke-width="1" fill="none"/><path d="M51.82 141.52 L51.05 141.90 L50.27 142.66 L49.89 143.42 L49.50 144.56 L49.50 146.46 L49.89 147.60 L50.27 148.36 L51.05 149.12 L51.82 149.50 L53.37 149.50 L54.14 149.12 L54.92 148.36 L55.30 147.60 L55.69 146.46 L55.69 144.56 L55.30 143.42 L54.92 142.66 L54.14 141.90 L53.37 141.52 L51.82 141.52M63.43 142.66 L62.66 141.90 L61.50 141.52 L59.95 141.52 L58.79 141.90 L58.01 142.66 L58.01 143.42 L58.40 144.18 L58.79 144.56 L59.56 144.94 L61.88 145.70 L62.66 146.08 L63.05 146.46 L63.43 147.22 L63.43 148.36 L62.66 149.12 L61.50 149.50 L59.95 149.50 L58.79 149.12 L58.01 148.36M64.59 150.26 L70.78 150.26M72.72 141.52 L76.98 141.52 L74.66 144.56 L75.82 144.56 L76.59 144.94 L76.98 145.32 L77.36 146.46 L77.36 147.22 L76.98 148.36 L76.20 149.12 L75.04 149.50 L73.88 149.50 L72.72 149.12 L72.33 148.74 L71.95 147.98M82.01 141.52 L80.85 141.90 L80.07 143.04 L79.69 144.94 L79.69 146.08 L80.07 147.98 L80.85 149.12 L82.01 149.50 L82.78 149.50 L83.94 149.12 L84.72 147.98 L85.10 146.08 L85.10 144.94 L84.72 143.04 L83.94 141.90 L82.78 141.52 L82.01 141.52M92.46 144.18 L92.07 145.32 L91.30 146.08 L90.13 146.46 L89.75 146.46 L88.59 146.08 L87.81 145.32 L87.43 144.18 L87.43 143.80 L87.81 142.66 L88.59 141.90 L89.75 141.52 L90.13 141.52 L91.30 141.90 L92.07 142.66 L92.46 144.18 L92.46 146.08 L92.07 147.98 L91.30 149.12 L90.13 149.50 L89.36 149.50 L88.20 149.12 L87.81 148.36M95.55 143.42 L95.55 143.04 L95.94 142.28 L96.33 141.90 L97.10 141.52 L98.65 141.52 L99.42 141.90 L99.81 142.28 L100.20 143.04 L100.20 143.80 L99.81 144.56 L99.04 145.70 L95.17 149.50 L100.58 149.50" stroke="#ffffff" stroke-width="1" fill="none"/><path d="M51.82 167.52 L51.05 167.90 L50.27 168.66 L49.89 169.42 L49.50 170.56 L49.50 172.46 L49.89 173.60 L50.27 174.36 L51.05 175.12 L51.82 175.50 L53.37 175.50 L54.14 175.12 L54.92 174.36 L55.30 173.60 L55.69 172.46 L55.69 170.56 L55.30 169.42 L54.92 168.66 L54.14 167.90 L53.37 167.52 L51.82 167.52M63.43 168.66 L62.66 167.90 L61.50 167.52 L59.95 167.52 L58.79 167.90 L58.01 168.66 L58.01 169.42 L58.40 170.18 L58.79 170.56 L59.56 170.94 L61.88 171.70 L62.66 172.08 L63.05 172.46 L63.43 173.22 L63.43 174.36 L62.66 175.12 L61.50 175.50 L59.95 175.50 L58.79 175.12 L58.01 174.36M64.59 176.26 L70.78 176.26M72.72 167.52 L76.98 167.52 L74.66 170.56 L75.82 170.56 L76.59 170.94 L76.98 171.32 L77.36 172.46 L77.36 173.22 L76.98 174.36 L76.20 175.12 L75.04 175.50 L73.88 175.50 L72.72 175.12 L72.33 174.74 L71.95 173.98M80.46 167.52 L84.72 167.52 L82.39 170.56 L83.56 170.56 L84.33 170.94 L84.72 171.32 L85.10 172.46 L85.10 173.22 L84.72 174.36 L83.94 175.12 L82.78 175.50 L81.62 175.50 L80.46 175.12 L80.07 174.74 L79.69 173.98M91.30 167.52 L87.43 172.84 L93.23 172.84M91.30 167.52 L91.30 175.50M95.55 169.42 L95.55 169.04 L95.94 168.28 L96.33 167.90 L97.10 167.52 L98.65 167.52 L99.42 167.90 L99.81 168.28 L100.20 169.04 L100.20 169.80 L99.81 170.56 L99.04 171.70 L95.17 175.50 L100.58 175.50" stroke="#ffffff" stroke-width="1" fill="none"/><path d="M51.82 192.52 L51.05 192.90 L50.27 193.66 L49.89 194.42 L49.50 195.56 L49.50 197.46 L49.89 198.60 L50.27 199.36 L51.05 200.12 L51.82 200.50 L53.37 200.50 L54.14 200.12 L54.92 199.36 L55.30 198.60 L55.69 197.46 L55.69 195.56 L55.30 194.42 L54.92 193.66 L54.14 192.90 L53.37 192.52 L51.82 192.52M63.43 193.66 L62.66 192.90 L61.50 192.52 L59.95 192.52 L58.79 192.90 L58.01 193.66 L58.01 194.42 L58.40 195.18 L58.79 195.56 L59.56 195.94 L61.88 196.70 L62.66 197.08 L63.05 197.46 L63.43 198.22 L63.43 199.36 L62.66 200.12 L61.50 200.50 L59.95 200.50 L58.79 200.12 L58.01 199.36M64.59 201.26 L70.78 201.26M72.72 192.52 L76.98 192.52 L74.66 195.56 L75.82 195.56 L76.59 195.94 L76.98 196.32 L77.36 197.46 L77.36 198.22 L76.98 199.36 L76.20 200.12 L75.04 200.50 L73.88 200.50 L72.72 200.12 L72.33 199.74 L71.95 198.98M80.46 192.52 L84.72 192.52 L82.39 195.56 L83.56 195.56 L84.33 195.94 L84.72 196.32 L85.10 197.46 L85.10 198.22 L84.72 199.36 L83.94 200.12 L82.78 200.50 L81.62 200.50 L80.46 200.12 L80.07 199.74 L79.69 198.98M92.46 193.66 L92.07 192.90 L90.91 192.52 L90.13 192.52 L88.97 192.90 L88.20 194.04 L87.81 195.94 L87.81 197.84 L88.20 199.36 L88.97 200.12 L90.13 200.50 L90.52 200.50 L91.68 200.12 L92.46 199.36 L92.84 198.22 L92.84 197.84 L92.46 196.70 L91.68 195.94 L90.52 195.56 L90.13 195.56 L88.97 195.94 L88.20 196.70 L87.81 197.84M96.33 194.04 L97.10 193.66 L98.26 192.52 L98.26 200.50" stroke="#ffffff" stroke-width="1" fill="none"/><path d="M51.82 218.52 L51.05 218.90 L50.27 219.66 L49.89 220.42 L49.50 221.56 L49.50 223.46 L49.89 224.60 L50.27 225.36 L51.05 226.12 L51.82 226.50 L53.37 226.50 L54.14 226.12 L54.92 225.36 L55.30 224.60 L55.69 223.46 L55.69 221.56 L55.30 220.42 L54.92 219.66 L54.14 218.90 L53.37 218.52 L51.82 218.52M63.43 219.66 L62.66 218.90 L61.50 218.52 L59.95 218.52 L58.79 218.90 L58.01 219.66 L58.01 220.42 L58.40 221.18 L58.79 221.56 L59.56 221.94 L61.88 222.70 L62.66 223.08 L63.05 223.46 L63.43 224.22 L63.43 225.36 L62.66 226.12 L61.50 226.50 L59.95 226.50 L58.79 226.12 L58.01 225.36M64.59 227.26 L70.78 227.26M72.72 218.52 L76.98 218.52 L74.66 221.56 L75.82 221.56 L76.59 221.94 L76.98 222.32 L77.36 223.46 L77.36 224.22 L76.98 225.36 L76.20 226.12 L75.04 226.50 L73.88 226.50 L72.72 226.12 L72.33 225.74 L71.95 224.98M80.46 218.52 L84.72 218.52 L82.39 221.56 L83.56 221.56 L84.33 221.94 L84.72 222.32 L85.10 223.46 L85.10 224.22 L84.72 225.36 L83.94 226.12 L82.78 226.50 L81.62 226.50 L80.46 226.12 L80.07 225.74 L79.69 224.98M89.36 218.52 L88.20 218.90 L87.81 219.66 L87.81 220.42 L88.20 221.18 L88.97 221.56 L90.52 221.94 L91.68 222.32 L92.46 223.08 L92.84 223.84 L92.84 224.98 L92.46 225.74 L92.07 226.12 L90.91 226.50 L89.36 226.50 L88.20 226.12 L87.81 225.74 L87.43 224.98 L87.43 223.84 L87.81 223.08 L88.59 222.32 L89.75 221.94 L91.30 221.56 L92.07 221.18 L92.46 220.42 L92.46 219.66 L92.07 218.90 L90.91 218.52 L89.36 218.52M100.58 218.52 L96.71 226.50M95.17 218.52 L100.58 218.52" stroke="#ffffff" stroke-width="1" fill="none"/><path d="M51.82 243.52 L51.05 243.90 L50.27 244.66 L49.89 245.42 L49.50 246.56 L49.50 248.46 L49.89 249.60 L50.27 250.36 L51.05 251.12 L51.82 251.50 L53.37 251.50 L54.14 251.12 L54.92 250.36 L55.30 249.60 L55.69 248.46 L55.69 246.56 L55.30 245.42 L54.92 244.66 L54.14 243.90 L53.37 243.52 L51.82 243.52M63.43 244.66 L62.66 243.90 L61.50 243.52 L59.95 243.52 L58.79 243.90 L58.01 244.66 L58.01 245.42 L58.40 246.18 L58.79 246.56 L59.56 246.94 L61.88 247.70 L62.66 248.08 L63.05 248.46 L63.43 249.22 L63.43 250.36 L62.66 251.12 L61.50 251.50 L59.95 251.50 L58.79 251.12 L58.01 250.36M64.59 252.26 L70.78 252.26M72.72 243.52 L76.98 243.52 L74.66 246.56 L75.82 246.56 L76.59 246.94 L76.98 247.32 L77.36 248.46 L77.36 249.22 L76.98 250.36 L76.20 251.12 L75.04 251.50 L73.88 251.50 L72.72 251.12 L72.33 250.74 L71.95 249.98M80.46 243.52 L84.72 243.52 L82.39 246.56 L83.56 246.56 L84.33 246.94 L84.72 247.32 L85.10 248.46 L85.10 249.22 L84.72 250.36 L83.94 251.12 L82.78 251.50 L81.62 251.50 L80.46 251.12 L80.07 250.74 L79.69 249.98M89.36 243.52 L88.20 243.90 L87.81 244.66 L87.81 245.42 L88.20 246.18 L88.97 246.56 L90.52 246.94 L91.68 247.32 L92.46 248.08 L92.84 248.84 L92.84 249.98 L92.46 250.74 L92.07 251.12 L90.91 251.50 L89.36 251.50 L88.20 251.12 L87.81 250.74 L87.43 249.98 L87.43 248.84 L87.81 248.08 L88.59 247.32 L89.75 246.94 L91.30 246.56 L92.07 246.18 L92.46 245.42 L92.46 244.66 L92.07 243.90 L90.91 243.52 L89.36 243.52M100.20 246.18 L99.81 247.32 L99.04 248.08 L97.88 248.46 L97.49 248.46 L96.33 248.08 L95.55 247.32 L95.17 246.18 L95.17 245.80 L95.55 244.66 L96.33 243.90 L97.49 243.52 L97.88 243.52 L99.04 243.90 L99.81 244.66 L100.20 246.18 L100.20 248.08 L99.81 249.98 L99.04 251.12 L97.88 251.50 L97.10 251.50 L95.94 251.12 L95.55 250.36" stroke="#ffffff" stroke-width="1" fill="none"/><path d="M51.82 269.52 L51.05 269.90 L50.27 270.66 L49.89 271.42 L49.50 272.56 L49.50 274.46 L49.89 275.60 L50.27 276.36 L51.05 277.12 L51.82 277.50 L53.37 277.50 L54.14 277.12 L54.92 276.36 L55.30 275.60 L55.69 274.46 L55.69 272.56 L55.30 271.42 L54.92 270.66 L54.14 269.90 L53.37 269.52 L51.82 269.52M63.43 270.66 L62.66 269.90 L61.50 269.52 L59.95 269.52 L58.79 269.90 L58.01 270.66 L58.01 271.42 L58.40 272.18 L58.79 272.56 L59.56 272.94 L61.88 273.70 L62.66 274.08 L63.05 274.46 L63.43 275.22 L63.43 276.36 L62.66 277.12 L61.50 277.50 L59.95 277.50 L58.79 277.12 L58.01 276.36M64.59 278.26 L70.78 278.26M72.72 269.52 L76.98 269.52 L74.66 272.56 L75.82 272.56 L76.59 272.94 L76.98 273.32 L77.36 274.46 L77.36 275.22 L76.98 276.36 L76.20 277.12 L75.04 277.50 L73.88 277.50 L72.72 277.12 L72.33 276.74 L71.95 275.98M80.46 269.52 L84.72 269.52 L82.39 272.56 L83.56 272.56 L84.33 272.94 L84.72 273.32 L85.10 274.46 L85.10 275.22 L84.72 276.36 L83.94 277.12 L82.78 277.50 L81.62 277.50 L80.46 277.12 L80.07 276.74 L79.69 275.98M92.46 272.18 L92.07 273.32 L91.30 274.08 L90.13 274.46 L89.75 274.46 L88.59 274.08 L87.81 273.32 L87.43 272.18 L87.43 271.80 L87.81 270.66 L88.59 269.90 L89.75 269.52 L90.13 269.52 L91.30 269.90 L92.07 270.66 L92.46 272.18 L92.46 274.08 L92.07 275.98 L91.30 277.12 L90.13 277.50 L89.36 277.50 L88.20 277.12 L87.81 276.36M97.49 269.52 L96.33 269.90 L95.55 271.04 L95.17 272.94 L95.17 274.08 L95.55 275.98 L96.33 277.12 L97.49 277.50 L98.26 277.50 L99.42 277.12 L100.20 275.98 L100.58 274.08 L100.58 272.94 L100.20 271.04 L99.42 269.90 L98.26 269.52 L97.49 269.52" stroke="#ffffff" stroke-width="1" fill="none"/><path d="M51.82 294.52 L51.05 294.90 L50.27 295.66 L49.89 296.42 L49.50 297.56 L49.50 299.46 L49.89 300.60 L50.27 301.36 L51.05 302.12 L51.82 302.50 L53.37 302.50 L54.14 302.12 L54.92 301.36 L55.30 300.60 L55.69 299.46 L55.69 297.56 L55.30 296.42 L54.92 295.66 L54.14 294.90 L53.37 294.52 L51.82 294.52M63.43 295.66 L62.66 294.90 L61.50 294.52 L59.95 294.52 L58.79 294.90 L58.01 295.66 L58.01 296.42 L58.40 297.18 L58.79 297.56 L59.56 297.94 L61.88 298.70 L62.66 299.08 L63.05 299.46 L63.43 300.22 L63.43 301.36 L62.66 302.12 L61.50 302.50 L59.95 302.50 L58.79 302.12 L58.01 301.36M64.59 303.26 L70.78 303.26M72.72 294.52 L76.98 294.52 L74.66 297.56 L75.82 297.56 L76.59 297.94 L76.98 298.32 L77.36 299.46 L77.36 300.22 L76.98 301.36 L76.20 302.12 L75.04 302.50 L73.88 302.50 L72.72 302.12 L72.33 301.74 L71.95 300.98M83.56 294.52 L79.69 299.84 L85.49 299.84M83.56 294.52 L83.56 302.50M89.75 294.52 L88.59 294.90 L87.81 296.04 L87.43 297.94 L87.43 299.08 L87.81 300.98 L88.59 302.12 L89.75 302.50 L90.52 302.50 L91.68 302.12 L92.46 300.98 L92.84 299.08 L92.84 297.94 L92.46 296.04 L91.68 294.90 L90.52 294.52 L89.75 294.52M99.81 294.52 L95.94 294.52 L95.55 297.94 L95.94 297.56 L97.10 297.18 L98.26 297.18 L99.42 297.56 L100.20 298.32 L100.58 299.46 L100.58 300.22 L100.20 301.36 L99.42 302.12 L98.26 302.50 L97.10 302.50 L95.94 302.12 L95.55 301.74 L95.17 300.98" stroke="#ffffff" stroke-width="1" fill="none"/><path d="M51.82 320.52 L51.05 320.90 L50.27 321.66 L49.89 322.42 L49.50 323.56 L49.50 325.46 L49.89 326.60 L50.27 327.36 L51.05 328.12 L51.82 328.50 L53.37 328.50 L54.14 328.12 L54.92 327.36 L55.30 326.60 L55.69 325.46 L55.69 323.56 L55.30 322.42 L54.92 321.66 L54.14 320.90 L53.37 320.52 L51.82 320.52M63.43 321.66 L62.66 320.90 L61.50 320.52 L59.95 320.52 L58.79 320.90 L58.01 321.66 L58.01 322.42 L58.40 323.18 L58.79 323.56 L59.56 323.94 L61.88 324.70 L62.66 325.08 L63.05 325.46 L63.43 326.22 L63.43 327.36 L62.66 328.12 L61.50 328.50 L59.95 328.50 L58.79 328.12 L58.01 327.36M64.59 329.26 L70.78 329.26M72.72 320.52 L76.98 320.52 L74.66 323.56 L75.82 323.56 L76.59 323.94 L76.98 324.32 L77.36 325.46 L77.36 326.22 L76.98 327.36 L76.20 328.12 L75.04 328.50 L73.88 328.50 L72.72 328.12 L72.33 327.74 L71.95 326.98M83.56 320.52 L79.69 325.84 L85.49 325.84M83.56 320.52 L83.56 328.50M87.81 322.42 L87.81 322.04 L88.20 321.28 L88.59 320.90 L89.36 320.52 L90.91 320.52 L91.68 320.90 L92.07 321.28 L92.46 322.04 L92.46 322.80 L92.07 323.56 L91.30 324.70 L87.43 328.50 L92.84 328.50M95.55 322.42 L95.55 322.04 L95.94 321.28 L96.33 320.90 L97.10 320.52 L98.65 320.52 L99.42 320.90 L99.81 321.28 L100.20 322.04 L100.20 322.80 L99.81 323.56 L99.04 324.70 L95.17 328.50 L100.58 328.50" stroke="#ffffff" stroke-width="1" fill="none"/><path d="M51.82 345.52 L51.05 345.90 L50.27 346.66 L49.89 347.42 L49.50 348.56 L49.50 350.46 L49.89 351.60 L50.27 352.36 L51.05 353.12 L51.82 353.50 L53.37 353.50 L54.14 353.12 L54.92 352.36 L55.30 351.60 L55.69 350.46 L55.69 348.56 L55.30 347.42 L54.92 346.66 L54.14 345.90 L53.37 345.52 L51.82 345.52M63.43 346.66 L62.66 345.90 L61.50 345.52 L59.95 345.52 L58.79 345.90 L58.01 346.66 L58.01 347.42 L58.40 348.18 L58.79 348.56 L59.56 348.94 L61.88 349.70 L62.66 350.08 L63.05 350.46 L63.43 351.22 L63.43 352.36 L62.66 353.12 L61.50 353.50 L59.95 353.50 L58.79 353.12 L58.01 352.36M64.59 354.26 L70.78 354.26M72.72 345.52 L76.98 345.52 L74.66 348.56 L75.82 348.56 L76.59 348.94 L76.98 349.32 L77.36 350.46 L77.36 351.22 L76.98 352.36 L76.20 353.12 L75.04 353.50 L73.88 353.50 L72.72 353.12 L72.33 352.74 L71.95 351.98M84.33 345.52 L80.46 345.52 L80.07 348.94 L80.46 348.56 L81.62 348.18 L82.78 348.18 L83.94 348.56 L84.72 349.32 L85.10 350.46 L85.10 351.22 L84.72 352.36 L83.94 353.12 L82.78 353.50 L81.62 353.50 L80.46 353.12 L80.07 352.74 L79.69 351.98M88.20 345.52 L92.46 345.52 L90.13 348.56 L91.30 348.56 L92.07 348.94 L92.46 349.32 L92.84 350.46 L92.84 351.22 L92.46 352.36 L91.68 353.12 L90.52 353.50 L89.36 353.50 L88.20 353.12 L87.81 352.74 L87.43 351.98M95.55 347.42 L95.55 347.04 L95.94 346.28 L96.33 345.90 L97.10 345.52 L98.65 345.52 L99.42 345.90 L99.81 346.28 L100.20 347.04 L100.20 347.80 L99.81 348.56 L99.04 349.70 L95.17 353.50 L100.58 353.50" stroke="#ffffff" stroke-width="1" fill="none"/><path d="M51.82 371.52 L51.05 371.90 L50.27 372.66 L49.89 373.42 L49.50 374.56 L49.50 376.46 L49.89 377.60 L50.27 378.36 L51.05 379.12 L51.82 379.50 L53.37 379.50 L54.14 379.12 L54.92 378.36 L55.30 377.60 L55.69 376.46 L55.69 374.56 L55.30 373.42 L54.92 372.66 L54.14 371.90 L53.37 371.52 L51.82 371.52M63.43 372.66 L62.66 371.90 L61.50 371.52 L59.95 371.52 L58.79 371.90 L58.01 372.66 L58.01 373.42 L58.40 374.18 L58.79 374.56 L59.56 374.94 L61.88 375.70 L62.66 376.08 L63.05 376.46 L63.43 377.22 L63.43 378.36 L62.66 379.12 L61.50 379.50 L59.95 379.50 L58.79 379.12 L58.01 378.36M64.59 380.26 L70.78 380.26M72.72 371.52 L76.98 371.52 L74.66 374.56 L75.82 374.56 L76.59 374.94 L76.98 375.32 L77.36 376.46 L77.36 377.22 L76.98 378.36 L76.20 379.12 L75.04 379.50 L73.88 379.50 L72.72 379.12 L72.33 378.74 L71.95 377.98M84.33 371.52 L80.46 371.52 L80.07 374.94 L80.46 374.56 L81.62 374.18 L82.78 374.18 L83.94 374.56 L84.72 375.32 L85.10 376.46 L85.10 377.22 L84.72 378.36 L83.94 379.12 L82.78 379.50 L81.62 379.50 L80.46 379.12 L80.07 378.74 L79.69 377.98M92.46 372.66 L92.07 371.90 L90.91 371.52 L90.13 371.52 L88.97 371.90 L88.20 373.04 L87.81 374.94 L87.81 376.84 L88.20 378.36 L88.97 379.12 L90.13 379.50 L90.52 379.50 L91.68 379.12 L92.46 378.36 L92.84 377.22 L92.84 376.84 L92.46 375.70 L91.68 374.94 L90.52 374.56 L90.13 374.56 L88.97 374.94 L88.20 375.70 L87.81 376.84M97.10 371.52 L95.94 371.90 L95.55 372.66 L95.55 373.42 L95.94 374.18 L96.71 374.56 L98.26 374.94 L99.42 375.32 L100.20 376.08 L100.58 376.84 L100.58 377.98 L100.20 378.74 L99.81 379.12 L98.65 379.50 L97.10 379.50 L95.94 379.12 L95.55 378.74 L95.17 377.98 L95.17 376.84 L95.55 376.08 L96.33 375.32 L97.49 374.94 L99.04 374.56 L99.81 374.18 L100.20 373.42 L100.20 372.66 L99.81 371.90 L98.65 371.52 L97.10 371.52" stroke="#ffffff" stroke-width="1" fill="none"/><path d="M51.82 396.52 L51.05 396.90 L50.27 397.66 L49.89 398.42 L49.50 399.56 L49.50 401.46 L49.89 402.60 L50.27 403.36 L51.05 404.12 L51.82 404.50 L53.37 404.50 L54.14 404.12 L54.92 403.36 L55.30 402.60 L55.69 401.46 L55.69 399.56 L55.30 398.42 L54.92 397.66 L54.14 396.90 L53.37 396.52 L51.82 396.52M63.43 397.66 L62.66 396.90 L61.50 396.52 L59.95 396.52 L58.79 396.90 L58.01 397.66 L58.01 398.42 L58.40 399.18 L58.79 399.56 L59.56 399.94 L61.88 400.70 L62.66 401.08 L63.05 401.46 L63.43 402.22 L63.43 403.36 L62.66 404.12 L61.50 404.50 L59.95 404.50 L58.79 404.12 L58.01 403.36M64.59 405.26 L70.78 405.26M72.72 396.52 L76.98 396.52 L74.66 399.56 L75.82 399.56 L76.59 399.94 L76.98 400.32 L77.36 401.46 L77.36 402.22 L76.98 403.36 L76.20 404.12 L75.04 404.50 L73.88 404.50 L72.72 404.12 L72.33 403.74 L71.95 402.98M84.33 396.52 L80.46 396.52 L80.07 399.94 L80.46 399.56 L81.62 399.18 L82.78 399.18 L83.94 399.56 L84.72 400.32 L85.10 401.46 L85.10 402.22 L84.72 403.36 L83.94 404.12 L82.78 404.50 L81.62 404.50 L80.46 404.12 L80.07 403.74 L79.69 402.98M92.84 396.52 L88.97 404.50M87.43 396.52 L92.84 396.52M97.49 396.52 L96.33 396.90 L95.55 398.04 L95.17 399.94 L95.17 401.08 L95.55 402.98 L96.33 404.12 L97.49 404.50 L98.26 404.50 L99.42 404.12 L100.20 402.98 L100.58 401.08 L100.58 399.94 L100.20 398.04 L99.42 396.90 L98.26 396.52 L97.49 396.52" stroke="#ffffff" stroke-width="1" fill="none"/><path d="M8.20 444.52 L8.20 452.50M8.20 452.50 L12.86 452.50M16.74 444.52 L13.63 452.50M16.74 444.52 L19.84 452.50M14.80 449.84 L18.68 449.84M26.82 445.66 L26.05 444.90 L24.88 444.52 L23.33 444.52 L22.17 444.90 L21.39 445.66 L21.39 446.42 L21.78 447.18 L22.17 447.56 L22.94 447.94 L25.27 448.70 L26.05 449.08 L26.44 449.46 L26.82 450.22 L26.82 451.36 L26.05 452.12 L24.88 452.50 L23.33 452.50 L22.17 452.12 L21.39 451.36M34.97 446.42 L34.58 445.66 L33.81 444.90 L33.03 444.52 L31.48 444.52 L30.70 444.90 L29.93 445.66 L29.54 446.42 L29.15 447.56 L29.15 449.46 L29.54 450.60 L29.93 451.36 L30.70 452.12 L31.48 452.50 L33.03 452.50 L33.81 452.12 L34.58 451.36 L34.97 450.60M39.63 444.52 L38.85 444.90 L38.08 445.66 L37.69 446.42 L37.30 447.56 L37.30 449.46 L37.69 450.60 L38.08 451.36 L38.85 452.12 L39.63 452.50 L41.18 452.50 L41.96 452.12 L42.73 451.36 L43.12 450.60 L43.51 449.46 L43.51 447.56 L43.12 446.42 L42.73 445.66 L41.96 444.90 L41.18 444.52 L39.63 444.52M46.22 449.08 L53.21 449.08M56.31 444.52 L56.31 452.50M56.31 448.32 L57.09 447.56 L57.86 447.18 L59.03 447.18 L59.80 447.56 L60.58 448.32 L60.97 449.46 L60.97 450.22 L60.58 451.36 L59.80 452.12 L59.03 452.50 L57.86 452.50 L57.09 452.12 L56.31 451.36M63.68 447.18 L63.68 450.98 L64.07 452.12 L64.85 452.50 L66.01 452.50 L66.79 452.12 L67.95 450.98M67.95 447.18 L67.95 452.50M73.38 444.52 L72.61 444.52 L71.83 444.90 L71.44 446.04 L71.44 452.50M70.28 447.18 L73.00 447.18M78.04 444.52 L77.26 444.52 L76.49 444.90 L76.10 446.04 L76.10 452.50M74.94 447.18 L77.65 447.18M79.98 449.46 L84.64 449.46 L84.64 448.70 L84.25 447.94 L83.86 447.56 L83.08 447.18 L81.92 447.18 L81.14 447.56 L80.37 448.32 L79.98 449.46 L79.98 450.22 L80.37 451.36 L81.14 452.12 L81.92 452.50 L83.08 452.50 L83.86 452.12 L84.64 451.36M87.35 447.18 L87.35 452.50M87.35 449.46 L87.74 448.32 L88.52 447.56 L89.29 447.18 L90.46 447.18" stroke="#ffffff" stroke-width="1" fill="none"/><path d="M86.86 425.04 L87.63 424.66 L88.79 423.52 L88.79 431.50M95.72 423.52 L94.56 423.90 L93.79 425.04 L93.41 426.94 L93.41 428.08 L93.79 429.98 L94.56 431.12 L95.72 431.50 L96.49 431.50 L97.64 431.12 L98.41 429.98 L98.80 428.08 L98.80 426.94 L98.41 425.04 L97.64 423.90 L96.49 423.52 L95.72 423.52M103.42 423.52 L102.26 423.90 L101.49 425.04 L101.11 426.94 L101.11 428.08 L101.49 429.98 L102.26 431.12 L103.42 431.50 L104.19 431.50 L105.34 431.12 L106.11 429.98 L106.50 428.08 L106.50 426.94 L106.11 425.04 L105.34 423.90 L104.19 423.52 L103.42 423.52" stroke="#ffffff" stroke-width="1" fill="none"/><path d="M95.33 435.52 L94.17 435.90 L93.79 436.66 L93.79 437.42 L94.17 438.18 L94.94 438.56 L96.48 438.94 L97.64 439.32 L98.41 440.08 L98.80 440.84 L98.80 441.98 L98.41 442.74 L98.03 443.12 L96.87 443.50 L95.33 443.50 L94.17 443.12 L93.79 442.74 L93.41 441.98 L93.41 440.84 L93.79 440.08 L94.56 439.32 L95.72 438.94 L97.25 438.56 L98.03 438.18 L98.41 437.42 L98.41 436.66 L98.03 435.90 L96.87 435.52 L95.33 435.52M103.42 435.52 L102.26 435.90 L101.49 437.04 L101.11 438.94 L101.11 440.08 L101.49 441.98 L102.26 443.12 L103.42 443.50 L104.19 443.50 L105.34 443.12 L106.11 441.98 L106.50 440.08 L106.50 438.94 L106.11 437.04 L105.34 435.90 L104.19 435.52 L103.42 435.52" stroke="#ffffff" stroke-width="1" fill="none"/><path d="M93.79 470.42 L93.79 470.04 L94.17 469.28 L94.56 468.90 L95.33 468.52 L96.87 468.52 L97.64 468.90 L98.03 469.28 L98.41 470.04 L98.41 470.80 L98.03 471.56 L97.25 472.70 L93.41 476.50 L98.80 476.50M103.42 468.52 L102.26 468.90 L101.49 470.04 L101.11 471.94 L101.11 473.08 L101.49 474.98 L102.26 476.12 L103.42 476.50 L104.19 476.50 L105.34 476.12 L106.11 474.98 L106.50 473.08 L106.50 471.94 L106.11 470.04 L105.34 468.90 L104.19 468.52 L103.42 468.52" stroke="#ffffff" stroke-width="1" fill="none"/><path d="M103.42 479.52 L102.26 479.90 L101.49 481.04 L101.11 482.94 L101.11 484.08 L101.49 485.98 L102.26 487.12 L103.42 487.50 L104.19 487.50 L105.34 487.12 L106.11 485.98 L106.50 484.08 L106.50 482.94 L106.11 481.04 L105.34 479.90 L104.19 479.52 L103.42 479.52" stroke="#ffffff" stroke-width="1" fill="none"/><path d="M308.59 511.42 L308.59 511.04 L308.97 510.28 L309.36 509.90 L310.12 509.52 L311.67 509.52 L312.44 509.90 L312.82 510.28 L313.21 511.04 L313.21 511.80 L312.82 512.56 L312.05 513.70 L308.20 517.50 L313.59 517.50M318.21 509.52 L317.06 509.90 L316.29 511.04 L315.90 512.94 L315.90 514.08 L316.29 515.98 L317.06 517.12 L318.21 517.50 L318.98 517.50 L320.13 517.12 L320.91 515.98 L321.29 514.08 L321.29 512.94 L320.91 511.04 L320.13 509.90 L318.98 509.52 L318.21 509.52M325.91 509.52 L324.75 509.90 L323.99 511.04 L323.60 512.94 L323.60 514.08 L323.99 515.98 L324.75 517.12 L325.91 517.50 L326.68 517.50 L327.84 517.12 L328.61 515.98 L328.99 514.08 L328.99 512.94 L328.61 511.04 L327.84 509.90 L326.68 509.52 L325.91 509.52M335.15 509.52 L331.30 514.84 L337.08 514.84M335.15 509.52 L335.15 517.50M345.55 508.00 L338.62 520.16M348.62 511.04 L349.40 510.66 L350.55 509.52 L350.55 517.50M355.56 511.42 L355.56 511.04 L355.94 510.28 L356.33 509.90 L357.10 509.52 L358.63 509.52 L359.41 509.90 L359.79 510.28 L360.18 511.04 L360.18 511.80 L359.79 512.56 L359.02 513.70 L355.17 517.50 L360.56 517.50M369.42 508.00 L362.49 520.16M373.65 509.52 L372.50 509.90 L371.73 511.04 L371.34 512.94 L371.34 514.08 L371.73 515.98 L372.50 517.12 L373.65 517.50 L374.42 517.50 L375.58 517.12 L376.35 515.98 L376.73 514.08 L376.73 512.94 L376.35 511.04 L375.58 509.90 L374.42 509.52 L373.65 509.52M384.05 510.66 L383.66 509.90 L382.50 509.52 L381.74 509.52 L380.58 509.90 L379.81 511.04 L379.43 512.94 L379.43 514.84 L379.81 516.36 L380.58 517.12 L381.74 517.50 L382.12 517.50 L383.28 517.12 L384.05 516.36 L384.43 515.22 L384.43 514.84 L384.05 513.70 L383.28 512.94 L382.12 512.56 L381.74 512.56 L380.58 512.94 L379.81 513.70 L379.43 514.84M394.06 511.04 L394.83 510.66 L395.98 509.52 L395.98 517.50M400.99 511.42 L400.99 511.04 L401.37 510.28 L401.75 509.90 L402.53 509.52 L404.06 509.52 L404.84 509.90 L405.22 510.28 L405.61 511.04 L405.61 511.80 L405.22 512.56 L404.45 513.70 L400.60 517.50 L405.99 517.50M409.07 512.18 L408.69 512.56 L409.07 512.94 L409.46 512.56 L409.07 512.18M409.07 516.74 L408.69 517.12 L409.07 517.50 L409.46 517.12 L409.07 516.74M412.54 511.42 L412.54 511.04 L412.92 510.28 L413.31 509.90 L414.08 509.52 L415.62 509.52 L416.38 509.90 L416.77 510.28 L417.16 511.04 L417.16 511.80 L416.77 512.56 L416.00 513.70 L412.15 517.50 L417.54 517.50M423.70 509.52 L419.85 514.84 L425.62 514.84M423.70 509.52 L423.70 517.50M428.32 512.18 L427.94 512.56 L428.32 512.94 L428.71 512.56 L428.32 512.18M428.32 516.74 L427.94 517.12 L428.32 517.50 L428.71 517.12 L428.32 516.74M433.71 509.52 L432.56 509.90 L431.79 511.04 L431.40 512.94 L431.40 514.08 L431.79 515.98 L432.56 517.12 L433.71 517.50 L434.48 517.50 L435.63 517.12 L436.41 515.98 L436.79 514.08 L436.79 512.94 L436.41 511.04 L435.63 509.90 L434.48 509.52 L433.71 509.52M441.41 509.52 L440.25 509.90 L439.49 511.04 L439.10 512.94 L439.10 514.08 L439.49 515.98 L440.25 517.12 L441.41 517.50 L442.18 517.50 L443.34 517.12 L444.11 515.98 L444.49 514.08 L444.49 512.94 L444.11 511.04 L443.34 509.90 L442.18 509.52 L441.41 509.52M447.57 516.74 L447.19 517.12 L447.57 517.50 L447.96 517.12 L447.57 516.74M452.96 509.52 L451.81 509.90 L451.04 511.04 L450.65 512.94 L450.65 514.08 L451.04 515.98 L451.81 517.12 L452.96 517.50 L453.73 517.50 L454.88 517.12 L455.66 515.98 L456.04 514.08 L456.04 512.94 L455.66 511.04 L454.88 509.90 L453.73 509.52 L452.96 509.52M460.66 509.52 L459.50 509.90 L458.74 511.04 L458.35 512.94 L458.35 514.08 L458.74 515.98 L459.50 517.12 L460.66 517.50 L461.43 517.50 L462.59 517.12 L463.36 515.98 L463.74 514.08 L463.74 512.94 L463.36 511.04 L462.59 509.90 L461.43 509.52 L460.66 509.52M468.36 509.52 L467.21 509.90 L466.44 511.04 L466.05 512.94 L466.05 514.08 L466.44 515.98 L467.21 517.12 L468.36 517.50 L469.13 517.50 L470.29 517.12 L471.06 515.98 L471.44 514.08 L471.44 512.94 L471.06 511.04 L470.29 509.90 L469.13 509.52 L468.36 509.52" stroke="#ffffff" stroke-width="1" fill="none"/><path d="M20.5 514.5 L19.5 513.5 L15.5 513.5 L14.5 514.5 L14.5 518.5 L15.5 519.5 L19.5 519.5 L20.5 518.5" stroke="#ff0000" stroke-width="1" fill="none"/><path d="M21.5 515.5 L23.5 513.5 L23.5 519.5" stroke="#ff0000" stroke-width="1" fill="none"/><path d="M41.5 514.5 L40.5 513.5 L36.5 513.5 L35.5 514.5 L35.5 518.5 L36.5 519.5 L40.5 519.5 L41.5 518.5" stroke="#00ff00" stroke-width="1" fill="none"/><path d="M42.5 514.5 L43.5 513.5 L46.5 513.5 L47.5 514.5 L47.5 515.5 L42.5 519.5 L47.5 519.5" stroke="#00ff00" stroke-width="1" fill="none"/><path d="M62.5 514.5 L61.5 513.5 L57.5 513.5 L56.5 514.5 L56.5 518.5 L57.5 519.5 L61.5 519.5 L62.5 518.5" stroke="#9bffff" stroke-width="1" fill="none"/><path d="M63.5 513.5 L67.5 513.5 L68.5 514.5 L68.5 515.5 L67.5 516.5 L65.5 516.5" stroke="#9bffff" stroke-width="1" fill="none"/><path d="M67.5 516.5 L68.5 517.5 L68.5 518.5 L67.5 519.5 L63.5 519.5" stroke="#9bffff" stroke-width="1" fill="none"/><path d="M83.5 513.5 L77.5 513.5 L77.5 519.5 L83.5 519.5" stroke="#ffff00" stroke-width="1" fill="none"/><path d="M79.5 516.5 L83.5 516.5" stroke="#ffff00" stroke-width="1" fill="none"/><path d="M83.5 513.5 L83.5 519.5" stroke="#ffff00" stroke-width="1" fill="none"/><path d="M84.5 513.5 L90.5 513.5" stroke="#ffff00" stroke-width="1" fill="none"/><path d="M87.5 513.5 L87.5 519.5" stroke="#ffff00" stroke-width="1" fill="none"/></svg></body></html>
